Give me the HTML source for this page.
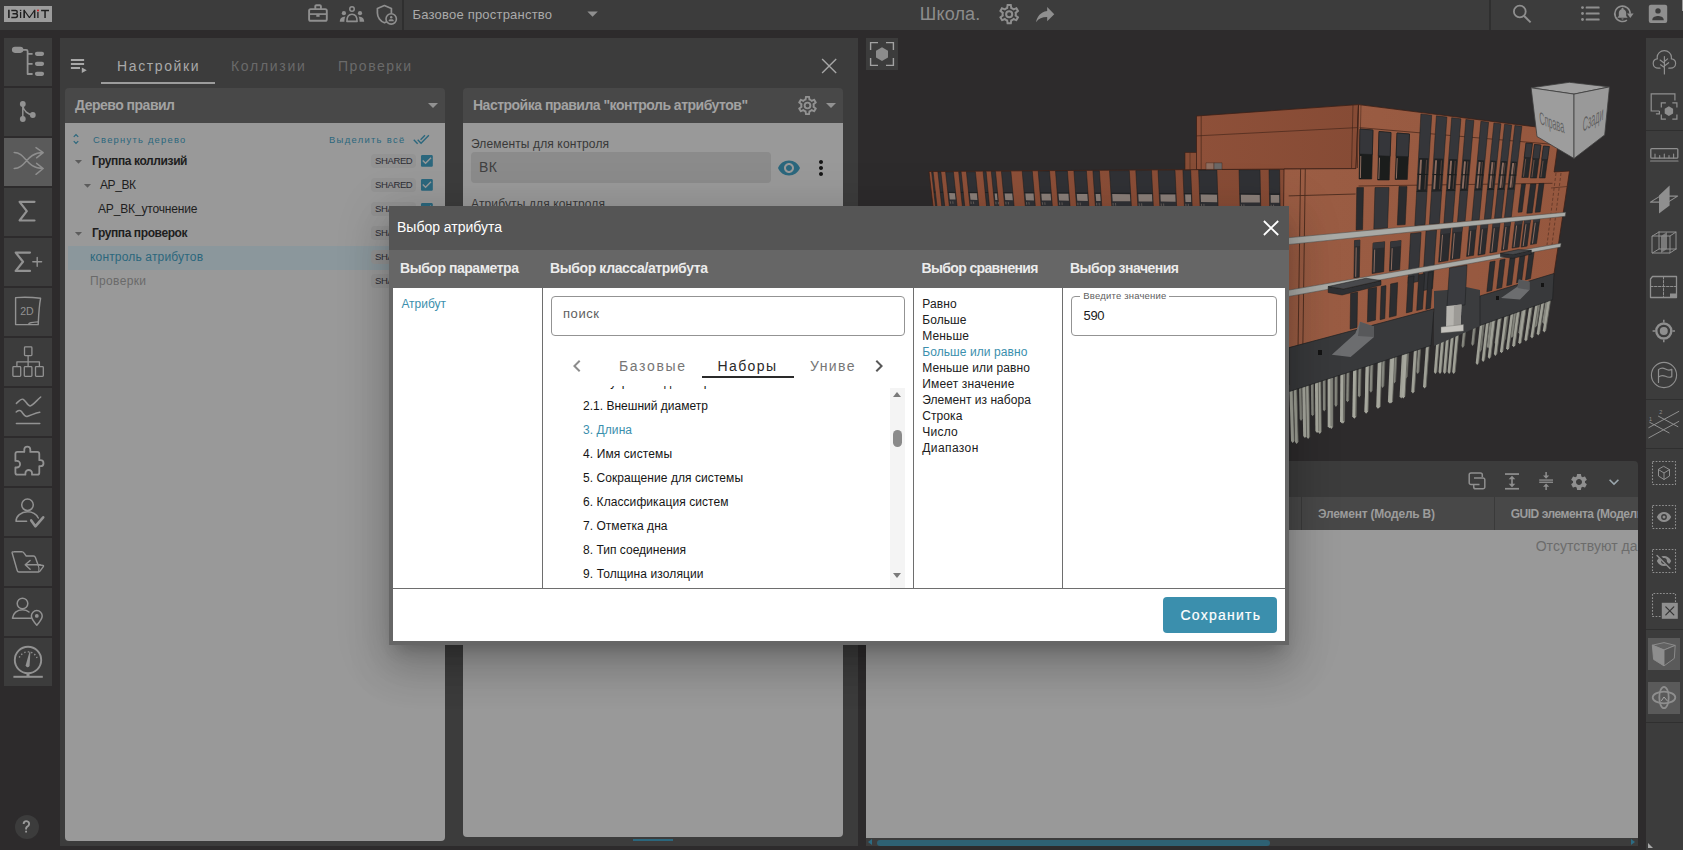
<!DOCTYPE html>
<html><head><meta charset="utf-8"><title>BIMIT</title>
<style>
html,body{margin:0;padding:0;}
body{width:1683px;height:850px;overflow:hidden;background:#2d2b2c;position:relative;font-family:"Liberation Sans",sans-serif;}
.t{position:absolute;white-space:nowrap;line-height:1;}
.r{position:absolute;display:block;}
</style></head><body>
<div class="r" style="left:0px;top:0px;width:1683px;height:30px;background:#3c3c3c;"></div>
<div class="r" style="left:4px;top:6.2px;width:48px;height:15.7px;background:#9c9c9c;"></div>
<svg class="r" style="left:4px;top:6px;" width="48" height="16" viewBox="0 0 48 16"><g fill="none" stroke="#202020" stroke-width="1.500"><path d="M4.900 3.700V12.100" stroke-width="1.600"/><path d="M7.300 4.450H11.600a1.650 1.650 0 0 1 0 3.300H8.500M11.600 7.750a1.850 1.850 0 0 1 0 3.700H7.300" stroke-width="1.450"/><path d="M16.600 6.100V12.100M33.900 6.100V12.100" stroke-width="1.300"/><path d="M20.200 12.100V4.300L25.400 11.600 30.600 4.300V12.100" stroke-width="1.100" stroke-linejoin="bevel"/><path d="M20.200 12.100V3.800M30.600 12.100V3.800" stroke-width="1.400"/><path d="M37.100 4.450H45M41.050 4.450V12.100" stroke-width="1.500"/></g><rect x="15.900" y="3.800" width="1.400" height="1.300" fill="#202020"/><circle cx="34" cy="4.400" r="1" fill="#d01818"/></svg>
<div class="r" style="left:402.2px;top:0px;width:2px;height:30px;background:#2f2f2f;"></div>
<div class="r" style="left:1489px;top:0px;width:2px;height:30px;background:#2f2f2f;"></div>
<div class="t" style="left:412.5px;top:8.20px;font-size:13px;color:#aaaaaa;letter-spacing:0.210px;">Базовое пространство</div>
<div class="t" style="left:919.8px;top:4.56px;font-size:18px;color:#8c8c8c;letter-spacing:0.140px;">Школа.</div>
<svg class="r" style="left:300px;top:0px;" width="110" height="30" viewBox="0 0 110 30"><g fill="none" stroke="#8f8f8f" stroke-width="1.9" stroke-linejoin="round">
<rect x="9.1" y="9.1" width="17.7" height="11.700" rx="1.600"/><path d="M15.300 9V6.300a1.100 1.100 0 0 1 1.100-1.100h3.400a1.100 1.100 0 0 1 1.100 1.100V9"/><path d="M9.100 14.100H26.800" stroke-width="1.700"/></g>
<rect x="16.300" y="14.300" width="3.300" height="2.500" fill="#8f8f8f"/>
<circle cx="52" cy="8.900" r="2.250" fill="none" stroke="#8f8f8f" stroke-width="1.500"/>
<path d="M46.900 21.400C46.900 17 48.500 14.300 52 14.300S57.100 17 57.100 21.400Z" fill="none" stroke="#8f8f8f" stroke-width="1.600" stroke-linejoin="round"/>
<circle cx="43.900" cy="13.200" r="2.100" fill="#8f8f8f"/><circle cx="60" cy="13.200" r="2.100" fill="#8f8f8f"/>
<path d="M39.800 21.800C39.800 18.500 41.500 16.500 45.400 16.400 44.600 18 44.400 19.800 44.400 21.800Z" fill="#8f8f8f"/>
<path d="M64.200 21.800C64.200 18.500 62.500 16.500 58.600 16.400 59.400 18 59.600 19.800 59.600 21.800Z" fill="#8f8f8f"/>
<path d="M91.400 13.200V8.500L84.400 5.500 77.400 8.500V13C77.400 17.500 80.400 21.500 84.400 22.800 85.300 22.500 86.100 22.100 86.800 21.600" fill="none" stroke="#8f8f8f" stroke-width="1.700" stroke-linejoin="round"/>
<circle cx="91.200" cy="18.900" r="5.200" fill="#3c3c3c" stroke="#8f8f8f" stroke-width="1.600"/>
<circle cx="91.200" cy="17.300" r="1.200" fill="#8f8f8f"/><path d="M88.500 21.300C88.500 19.600 90 19.300 91.200 19.300S93.900 19.600 93.900 21.300Z" fill="#8f8f8f"/></svg>
<svg class="r" style="left:579.6px;top:0.9px;" width="25.2" height="25.2" viewBox="0 0 24 24"><path d="M7 10l5 5 5-5z" fill="#8f8f8f"/></svg>
<svg class="r" style="left:996.6px;top:1.8px;" width="24.4" height="24.4" viewBox="0 0 24 24"><path d="M12,8A4,4 0 0,1 16,12A4,4 0 0,1 12,16A4,4 0 0,1 8,12A4,4 0 0,1 12,8M12,10A2,2 0 0,0 10,12A2,2 0 0,0 12,14A2,2 0 0,0 14,12A2,2 0 0,0 12,10M10,22C9.75,22 9.54,21.82 9.5,21.58L9.13,18.93C8.5,18.68 7.96,18.34 7.44,17.94L4.95,18.95C4.73,19.03 4.46,18.95 4.34,18.73L2.34,15.27C2.21,15.05 2.27,14.78 2.46,14.63L4.57,12.97L4.5,12L4.57,11L2.46,9.37C2.27,9.22 2.21,8.95 2.34,8.73L4.34,5.27C4.46,5.05 4.73,4.96 4.95,5.05L7.44,6.05C7.96,5.66 8.5,5.32 9.13,5.07L9.5,2.42C9.54,2.18 9.75,2 10,2H14C14.25,2 14.46,2.18 14.5,2.42L14.87,5.07C15.5,5.32 16.04,5.66 16.56,6.05L19.05,5.05C19.27,4.96 19.54,5.05 19.66,5.27L21.66,8.73C21.79,8.95 21.73,9.22 21.54,9.37L19.43,11L19.5,12L19.43,13L21.54,14.63C21.73,14.78 21.79,15.05 21.66,15.27L19.66,18.73C19.54,18.95 19.27,19.04 19.05,18.95L16.56,17.95C16.04,18.34 15.5,18.68 14.87,18.93L14.5,21.58C14.46,21.82 14.25,22 14,22H10M11.25,4L10.88,6.61C9.68,6.86 8.62,7.5 7.85,8.39L5.44,7.35L4.69,8.65L6.8,10.2C6.4,11.37 6.4,12.64 6.8,13.8L4.68,15.36L5.43,16.66L7.86,15.62C8.63,16.5 9.68,17.14 10.87,17.38L11.24,20H12.76L13.13,17.39C14.32,17.14 15.37,16.5 16.14,15.62L18.57,16.66L19.32,15.36L17.2,13.81C17.6,12.64 17.6,11.37 17.2,10.2L19.31,8.65L18.56,7.35L16.15,8.39C15.38,7.5 14.32,6.86 13.12,6.62L12.75,4H11.25Z" fill="#8f8f8f"/></svg>
<svg class="r" style="left:1032.8px;top:1.9px;" width="24.3" height="24.3" viewBox="0 0 24 24"><path d="M21,12L14,5V9C7,10 4,15 3,20C5.5,16.5 9,14.9 14,14.9V19L21,12Z" fill="#8f8f8f"/></svg>
<svg class="r" style="left:1508px;top:0px;" width="175" height="30" viewBox="0 0 175 30"><circle cx="11.800" cy="11.500" r="5.900" fill="none" stroke="#8f8f8f" stroke-width="1.800"/><path d="M16.200 16L22.600 22.400" stroke="#8f8f8f" stroke-width="2"/>
<g fill="#8f8f8f"><circle cx="74.500" cy="7.600" r="1.400"/><circle cx="74.500" cy="13.500" r="1.400"/><circle cx="74.500" cy="19.500" r="1.400"/>
<rect x="77.700" y="6.600" width="13.900" height="2" rx=".6"/><rect x="77.700" y="12.500" width="13.900" height="2" rx=".6"/><rect x="77.700" y="18.500" width="13.900" height="2" rx=".6"/></g>
<path d="M118.920 20.110A7.700 7.700 0 1 1 122.200 13.800" fill="none" stroke="#8f8f8f" stroke-width="1.600"/>
<path d="M119 13.500h6.600l-3.300 4.500z" fill="#8f8f8f"/>
<path d="M114.500 7.700c-.6 0-1 .4-1 1v.5c-1.700.5-2.700 2-2.700 3.800v3l-1.200 1.200v.6h9.800v-.6l-1.200-1.200v-3c0-1.800-1-3.300-2.700-3.800v-.5c0-.6-.4-1-1-1zM113.400 18.500a1.100 1.100 0 0 0 2.200 0z" fill="#8f8f8f"/>
<rect x="140.800" y="4.800" width="18.400" height="18.100" rx="2" fill="#8f8f8f"/>
<circle cx="150" cy="10.900" r="2.700" fill="#3c3c3c"/><path d="M144.300 19.700C144.300 17 148 16 150 16S155.700 17 155.700 19.700V20.200H144.300Z" fill="#3c3c3c"/></svg>
<div class="r" style="left:1682px;top:0px;width:1px;height:11px;background:#9a9a9a;"></div>
<div class="r" style="left:4px;top:38px;width:48px;height:48px;background:#3c3c3c;"></div>
<div class="r" style="left:4px;top:88px;width:48px;height:48px;background:#3c3c3c;"></div>
<div class="r" style="left:4px;top:138px;width:48px;height:48px;background:#5a5a5a;"></div>
<div class="r" style="left:4px;top:188px;width:48px;height:48px;background:#3c3c3c;"></div>
<div class="r" style="left:4px;top:238px;width:48px;height:48px;background:#3c3c3c;"></div>
<div class="r" style="left:4px;top:288px;width:48px;height:48px;background:#3c3c3c;"></div>
<div class="r" style="left:4px;top:338px;width:48px;height:48px;background:#3c3c3c;"></div>
<div class="r" style="left:4px;top:388px;width:48px;height:48px;background:#3c3c3c;"></div>
<div class="r" style="left:4px;top:438px;width:48px;height:48px;background:#3c3c3c;"></div>
<div class="r" style="left:4px;top:488px;width:48px;height:48px;background:#3c3c3c;"></div>
<div class="r" style="left:4px;top:538px;width:48px;height:48px;background:#3c3c3c;"></div>
<div class="r" style="left:4px;top:588px;width:48px;height:48px;background:#3c3c3c;"></div>
<div class="r" style="left:4px;top:638px;width:48px;height:48px;background:#3c3c3c;"></div>
<div class="r" style="left:15px;top:815px;width:24px;height:24px;border-radius:12px;background:#3c3c3c"></div>
<svg class="r" style="left:19.1px;top:818.5px;" width="14.8" height="14.8" viewBox="0 0 24 24"><path d="M10,19H13V22H10V19M12,2C17.35,2.22 19.68,7.62 16.5,11.67C15.67,12.67 14.33,13.33 13.67,14.17C13,15 13,16 13,17H10C10,15.33 10,13.92 10.67,12.92C11.33,11.92 12.67,11.33 13.5,10.67C15.92,8.43 15.32,5.26 12,5A3,3 0 0,0 9,8H6A6,6 0 0,1 12,2Z" fill="#9a9a9a"/></svg>
<svg class="r" style="left:4px;top:38px" width="48" height="48" viewBox="0 0 48 48" fill="none" stroke="#929292" stroke-width="1.6" stroke-linecap="round" stroke-linejoin="round"><rect x="7.9" y="8.8" width="11.5" height="6.1" rx="3.05" fill="#929292" stroke="none"/><path d="M19 11.8h3.2a1.4 1.4 0 0 1 1.4 1.4V36h5" stroke-width="1.8" stroke-linecap="butt"/><path d="M23.6 15.9h5M23.6 25.9h5" stroke-width="1.8" stroke-linecap="butt"/><rect x="30.9" y="13.8" width="9.2" height="4.1" rx="2.05" fill="#929292" stroke="none"/><rect x="30.9" y="23.8" width="9.2" height="4.1" rx="2.05" fill="#929292" stroke="none"/><rect x="30.9" y="33.8" width="9.2" height="4.1" rx="2.05" fill="#929292" stroke="none"/></svg>
<svg class="r" style="left:4px;top:88px" width="48" height="48" viewBox="0 0 48 48" fill="none" stroke="#929292" stroke-width="1.6" stroke-linecap="round" stroke-linejoin="round"><circle cx="18.8" cy="16" r="2.9" fill="#929292" stroke="none"/><circle cx="18.8" cy="31" r="2.9" fill="#929292" stroke="none"/><circle cx="28.8" cy="27" r="2.9" fill="#929292" stroke="none"/><path d="M18.8 16V31M18.8 17.5C19.5 23 24 26.5 28.8 27" stroke-width="1.5"/></svg>
<svg class="r" style="left:4px;top:138px" width="48" height="48" viewBox="0 0 48 48" fill="none" stroke="#8e8e8e" stroke-width="1.6" stroke-linecap="round" stroke-linejoin="round"><path d="M10.2 14.6C22 14.6 22 30.5 39 30.5M10.2 30.500C22 30.5 22 14.6 39 14.6M32 9.6l7.2 5-6.6 5.200M32.6 25.4l6.600 5.100-7.200 5.800" stroke-width="1.5"/></svg>
<svg class="r" style="left:4px;top:188px" width="48" height="48" viewBox="0 0 48 48" fill="none" stroke="#929292" stroke-width="1.6" stroke-linecap="round" stroke-linejoin="round"><path d="M30.5 13.8H15.6L22.800 23.100 15.600 32.500H30.500" stroke-width="2.2"/></svg>
<svg class="r" style="left:4px;top:238px" width="48" height="48" viewBox="0 0 48 48" fill="none" stroke="#929292" stroke-width="1.6" stroke-linecap="round" stroke-linejoin="round"><path d="M26 14.600H11.700L19 23.700 11.700 32.900H26" stroke-width="2.200"/><path d="M28.8 23.800h8.800M33.200 19.400v8.800" stroke-width="1.4"/></svg>
<svg class="r" style="left:4px;top:288px" width="48" height="48" viewBox="0 0 48 48" fill="none" stroke="#929292" stroke-width="1.6" stroke-linecap="round" stroke-linejoin="round"><path d="M11.6 9.6C20 9 29 9.300 36.600 10.300 35 18 34.600 28 34.200 36.600H11.600Z" stroke-width="1.400"/><path d="M24.500 36.300C25 34.500 27 34.300 34.200 33.800" stroke-width="1.300"/><text x="16.200" y="26.600" font-family="Liberation Sans" font-size="10" fill="#929292" stroke="none" textLength="13.500" lengthAdjust="spacingAndGlyphs">2D</text></svg>
<svg class="r" style="left:4px;top:338px" width="48" height="48" viewBox="0 0 48 48" fill="none" stroke="#929292" stroke-width="1.6" stroke-linecap="round" stroke-linejoin="round"><rect x="20.5" y="8.9" width="7.4" height="8.7" rx="0.8" stroke-width="1.300"/><rect x="8.9" y="28.700" width="7.800" height="9.700" rx="0.8" stroke-width="1.300"/><rect x="20.300" y="28.700" width="7.600" height="9.700" rx="0.8" stroke-width="1.300"/><rect x="31.500" y="28.700" width="7.800" height="9.700" rx="0.800" stroke-width="1.300"/><path d="M24.100 17.600V28.600M12.900 28.600V23.800H35.400V28.600" stroke-width="1.300" stroke-linecap="butt"/></svg>
<svg class="r" style="left:4px;top:388px" width="48" height="48" viewBox="0 0 48 48" fill="none" stroke="#929292" stroke-width="1.6" stroke-linecap="round" stroke-linejoin="round"><path d="M12.400 15.400C15 13 17 10.500 19 11.200 21.500 12 23.500 18 26.100 18 29 17.500 33 12 36.700 9M12.200 24C14 22.300 16 21.800 17.500 23.500 19 25.500 20.500 28.600 23 28.400 27 27.500 31 24.800 35.800 24.300M12.400 35.600H35.800" stroke-width="1.500"/></svg>
<svg class="r" style="left:4px;top:438px" width="48" height="48" viewBox="0 0 48 48" fill="none" stroke="#929292" stroke-width="1.6" stroke-linecap="round" stroke-linejoin="round"><path d="M23.300 8.600a3 3 0 0 1 3 3v2.300h7a2 2 0 0 1 2 2v6.300h1.200a3 3 0 0 1 0 6h-1.200v6.500a2 2 0 0 1-2 2h-5.300v-1.400a3.300 3.300 0 0 0-6.600 0v1.400h-8a2 2 0 0 1-2-2v-5.200h1.400a3.300 3.300 0 0 0 0-6.600h-1.400v-7a2 2 0 0 1 2-2h6.900v-2.300a3 3 0 0 1 3-3z" stroke-width="1.800"/></svg>
<svg class="r" style="left:4px;top:488px" width="48" height="48" viewBox="0 0 48 48" fill="none" stroke="#929292" stroke-width="1.6" stroke-linecap="round" stroke-linejoin="round"><circle cx="23.500" cy="16.800" r="5.800" stroke-width="1.500"/><path d="M22.600 33.200H12C12 28 17 23.800 23.500 23.800 28.500 23.800 32.500 26.500 34.300 30" stroke-width="1.500"/><path d="M27.200 32.400l4.200 5.900 7.800-9" stroke-width="2.600"/></svg>
<svg class="r" style="left:4px;top:538px" width="48" height="48" viewBox="0 0 48 48" fill="none" stroke="#929292" stroke-width="1.6" stroke-linecap="round" stroke-linejoin="round"><path d="M8.100 14.700C8 14 9 13.800 10 13.800L17.500 13.600C19 13.600 19.500 14.200 20.300 15.400L22.200 18H29.500C30.500 18 31 18.500 31.400 19.600L34 26.800 39 27.500C39.600 27.600 39.700 28 39.300 28.600L36 33.200C35.500 33.900 35 34 34.200 34H15C14 34 13.500 33.600 13.200 32.500Z" stroke-width="1.400"/><path d="M36.200 26.800H21.700M26.100 22.400l-4.900 4.400 4.900 4.400" stroke-width="1.400"/><path d="M34 26.800C35 29 35.500 31.500 34.700 33.800" stroke-width="1.100"/></svg>
<svg class="r" style="left:4px;top:588px" width="48" height="48" viewBox="0 0 48 48" fill="none" stroke="#929292" stroke-width="1.6" stroke-linecap="round" stroke-linejoin="round"><circle cx="18.500" cy="15.500" r="5.300" stroke-width="1.500"/><path d="M27 30.200H8.500C9 25.500 13 21.700 18.500 21.700 21 21.700 23.500 22.600 25 24" stroke-width="1.500"/><path d="M32.800 37.200C29.500 33.500 27.400 31 27.400 28a5.400 5.400 0 0 1 10.800 0C38.200 31 36.100 33.500 32.800 37.200Z" stroke-width="1.500"/><circle cx="32.800" cy="27.900" r="1.900" fill="#929292" stroke="none"/></svg>
<svg class="r" style="left:4px;top:638px" width="48" height="48" viewBox="0 0 48 48" fill="none" stroke="#929292" stroke-width="1.6" stroke-linecap="round" stroke-linejoin="round"><circle cx="24" cy="22" r="13.200" stroke-width="1.900"/><path d="M21.700 27.200L25.600 13.600 26.400 13.800 25.600 27.800A2 2 0 0 1 21.700 27.200Z" fill="#929292" stroke="none"/><path d="M15.300 19.500A9.600 9.600 0 0 1 33 20" stroke-width="1.400" stroke-dasharray="1.300 2.200" stroke-linecap="butt"/><path d="M24 35.300V38.500" stroke-width="3" stroke-linecap="butt"/><path d="M9.400 38.800H38.800" stroke-width="2" stroke-linecap="butt"/></svg>
<div class="r" style="left:60px;top:38px;width:798px;height:808px;background:#3c3c3c;"></div>
<svg class="r" style="left:68px;top:55px;" width="22" height="22" viewBox="0 0 22 22"><path d="M2.9 3.9h13.200v2H2.900zM2.900 7.900h13.200v2H2.900zM2.900 11.900h9.100v2H2.900zM13.800 12.500v5.500l5-2.750z" fill="#a8a8a8"/></svg>
<div class="t" style="left:117.0px;top:59.15px;font-size:14px;color:#a9a9a9;letter-spacing:1.620px;">Настройки</div>
<div class="t" style="left:231.0px;top:59.15px;font-size:14px;color:#6a6a6a;letter-spacing:1.708px;">Коллизии</div>
<div class="t" style="left:338.0px;top:59.15px;font-size:14px;color:#6a6a6a;letter-spacing:1.510px;">Проверки</div>
<div class="r" style="left:101px;top:82px;width:114px;height:2px;background:#9c9c9c;"></div>
<svg class="r" style="left:818px;top:55px;" width="22" height="22" viewBox="0 0 22 22"><path d="M4.100 4.100L18.200 18.100M18.200 4.100L4.100 18.100" stroke="#a6a6a6" stroke-width="1.400" fill="none"/></svg>
<div class="r" style="left:65px;top:88px;width:380px;height:35px;background:#484848;border-radius:4px 4px 0 0"></div>
<div class="r" style="left:65px;top:123px;width:380px;height:718px;background:#999999;border-radius:0 0 4px 4px"></div>
<div class="t" style="left:75.0px;top:97.95px;font-size:14px;color:#a2a2a2;font-weight:700;letter-spacing:-0.502px;">Дерево правил</div>
<svg class="r" style="left:420.8px;top:93.3px;" width="24" height="24" viewBox="0 0 24 24"><path d="M7 10l5 5 5-5z" fill="#929292"/></svg>
<svg class="r" style="left:69px;top:132px;" width="14" height="14" viewBox="0 0 24 24"><path d="M12 5.83L15.17 9l1.41-1.41L12 3 7.41 7.59 8.83 9 12 5.83zm0 12.34L8.83 15l-1.41 1.41L12 21l4.59-4.59L15.17 15 12 18.17z" fill="#2b677d"/></svg>
<div class="t" style="left:93.0px;top:135.14px;font-size:9.4px;color:#2b677d;letter-spacing:1.242px;">Свернуть дерево</div>
<div class="t" style="left:329.0px;top:135.34px;font-size:9.4px;color:#2b677d;letter-spacing:1.319px;">Выделить всё</div>
<svg class="r" style="left:413.2px;top:130.8px;" width="16.6" height="16.6" viewBox="0 0 24 24"><path d="M18 7l-1.41-1.41-6.34 6.34 1.41 1.41L18 7zm4.24-1.41L11.66 16.17 7.48 12l-1.41 1.41L11.660 19l12-12-1.420-1.410zM.41 13.41L6 19l1.41-1.410L1.830 12 .410 13.410z" fill="#2b677d"/></svg>
<div class="r" style="left:68px;top:245.5px;width:374px;height:24px;background:#8b979c;"></div>
<div class="t" style="left:92.0px;top:155.14px;font-size:12px;color:#1e1e1e;font-weight:700;letter-spacing:-0.387px;">Группа коллизий</div>
<div class="r" style="left:371.2px;top:154.1px;width:45.300px;height:13.500px;border-radius:4px;background:#939393"></div>
<div class="t" style="left:375.0px;top:155.76px;font-size:9.5px;color:#2c2c34;letter-spacing:-0.379px;">SHARED</div>
<svg class="r" style="left:419.2px;top:153px;" width="15.8" height="15.8" viewBox="0 0 24 24"><path d="M19 3H5c-1.11 0-2 .9-2 2v14c0 1.1.89 2 2 2h14c1.11 0 2-.9 2-2V5c0-1.1-.89-2-2-2zm-9 14l-5-5 1.41-1.41L10 14.17l7.59-7.59L19 8l-9 9z" fill="#2b677d"/></svg>
<div class="t" style="left:100.0px;top:179.14px;font-size:12px;color:#1e1e1e;letter-spacing:-0.419px;">АР_ВК</div>
<div class="r" style="left:371.2px;top:178.1px;width:45.300px;height:13.500px;border-radius:4px;background:#939393"></div>
<div class="t" style="left:375.0px;top:179.76px;font-size:9.5px;color:#2c2c34;letter-spacing:-0.379px;">SHARED</div>
<svg class="r" style="left:419.2px;top:177px;" width="15.8" height="15.8" viewBox="0 0 24 24"><path d="M19 3H5c-1.11 0-2 .9-2 2v14c0 1.1.89 2 2 2h14c1.11 0 2-.9 2-2V5c0-1.1-.89-2-2-2zm-9 14l-5-5 1.41-1.41L10 14.17l7.59-7.59L19 8l-9 9z" fill="#2b677d"/></svg>
<div class="t" style="left:98.0px;top:203.14px;font-size:12px;color:#1e1e1e;letter-spacing:-0.155px;">АР_ВК_уточнение</div>
<div class="r" style="left:371.2px;top:202.1px;width:45.300px;height:13.500px;border-radius:4px;background:#939393"></div>
<div class="t" style="left:375.0px;top:203.76px;font-size:9.5px;color:#2c2c34;letter-spacing:-0.379px;">SHARED</div>
<svg class="r" style="left:419.2px;top:201px;" width="15.8" height="15.8" viewBox="0 0 24 24"><path d="M19 3H5c-1.11 0-2 .9-2 2v14c0 1.1.89 2 2 2h14c1.11 0 2-.9 2-2V5c0-1.1-.89-2-2-2zm-9 14l-5-5 1.41-1.41L10 14.17l7.59-7.59L19 8l-9 9z" fill="#2b677d"/></svg>
<div class="t" style="left:92.0px;top:227.14px;font-size:12px;color:#1e1e1e;font-weight:700;letter-spacing:-0.404px;">Группа проверок</div>
<div class="r" style="left:371.2px;top:226.1px;width:45.300px;height:13.500px;border-radius:4px;background:#939393"></div>
<div class="t" style="left:375.0px;top:227.76px;font-size:9.5px;color:#2c2c34;letter-spacing:-0.379px;">SHARED</div>
<svg class="r" style="left:419.2px;top:225px;" width="15.8" height="15.8" viewBox="0 0 24 24"><path d="M19 3H5c-1.11 0-2 .9-2 2v14c0 1.1.89 2 2 2h14c1.11 0 2-.9 2-2V5c0-1.1-.89-2-2-2zm-9 14l-5-5 1.41-1.41L10 14.17l7.59-7.59L19 8l-9 9z" fill="#2b677d"/></svg>
<div class="t" style="left:90.0px;top:251.14px;font-size:12px;color:#2b677d;letter-spacing:0.168px;">контроль атрибутов</div>
<div class="r" style="left:371.2px;top:250.1px;width:45.300px;height:13.500px;border-radius:4px;background:#939393"></div>
<div class="t" style="left:375.0px;top:251.76px;font-size:9.5px;color:#2c2c34;letter-spacing:-0.379px;">SHARED</div>
<svg class="r" style="left:419.2px;top:249px;" width="15.8" height="15.8" viewBox="0 0 24 24"><path d="M19 3H5c-1.11 0-2 .9-2 2v14c0 1.1.89 2 2 2h14c1.11 0 2-.9 2-2V5c0-1.1-.89-2-2-2zm-9 14l-5-5 1.41-1.41L10 14.17l7.59-7.59L19 8l-9 9z" fill="#2b677d"/></svg>
<div class="t" style="left:90.0px;top:275.14px;font-size:12px;color:#6a6a6a;letter-spacing:0.356px;">Проверки</div>
<div class="r" style="left:371.2px;top:274.1px;width:45.300px;height:13.500px;border-radius:4px;background:#939393"></div>
<div class="t" style="left:375.0px;top:275.76px;font-size:9.5px;color:#2c2c34;letter-spacing:-0.379px;">SHARED</div>
<svg class="r" style="left:419.2px;top:273px;" width="15.8" height="15.8" viewBox="0 0 24 24"><path d="M19 3H5c-1.11 0-2 .9-2 2v14c0 1.1.89 2 2 2h14c1.11 0 2-.9 2-2V5c0-1.1-.89-2-2-2zm-9 14l-5-5 1.41-1.41L10 14.17l7.59-7.59L19 8l-9 9z" fill="#2b677d"/></svg>
<svg class="r" style="left:69.5px;top:153.2px;" width="17" height="17" viewBox="0 0 24 24"><path d="M7 10l5 5 5-5z" fill="#5c5c5c"/></svg>
<svg class="r" style="left:78.5px;top:177.2px;" width="17" height="17" viewBox="0 0 24 24"><path d="M7 10l5 5 5-5z" fill="#5c5c5c"/></svg>
<svg class="r" style="left:69.5px;top:225.2px;" width="17" height="17" viewBox="0 0 24 24"><path d="M7 10l5 5 5-5z" fill="#5c5c5c"/></svg>
<div class="r" style="left:463px;top:88px;width:380px;height:35px;background:#484848;border-radius:4px 4px 0 0"></div>
<div class="r" style="left:463px;top:123px;width:380px;height:713.800px;background:#999999;border-radius:0 0 4px 4px"></div>
<div class="t" style="left:473.0px;top:97.95px;font-size:14px;color:#a2a2a2;font-weight:700;letter-spacing:-0.504px;">Настройка правила "контроль атрибутов"</div>
<svg class="r" style="left:795.5px;top:93.5px;" width="23" height="23" viewBox="0 0 24 24"><path d="M12,8A4,4 0 0,1 16,12A4,4 0 0,1 12,16A4,4 0 0,1 8,12A4,4 0 0,1 12,8M12,10A2,2 0 0,0 10,12A2,2 0 0,0 12,14A2,2 0 0,0 14,12A2,2 0 0,0 12,10M10,22C9.75,22 9.54,21.82 9.5,21.58L9.13,18.93C8.5,18.68 7.96,18.34 7.44,17.94L4.95,18.95C4.73,19.03 4.46,18.95 4.34,18.73L2.34,15.27C2.21,15.05 2.27,14.78 2.46,14.63L4.57,12.97L4.5,12L4.57,11L2.46,9.37C2.27,9.22 2.21,8.95 2.34,8.73L4.34,5.27C4.46,5.05 4.73,4.96 4.95,5.05L7.44,6.05C7.96,5.66 8.5,5.32 9.13,5.07L9.5,2.42C9.54,2.18 9.75,2 10,2H14C14.25,2 14.46,2.18 14.5,2.42L14.87,5.07C15.5,5.32 16.04,5.66 16.56,6.05L19.05,5.05C19.27,4.96 19.54,5.05 19.66,5.27L21.66,8.73C21.79,8.95 21.73,9.22 21.54,9.37L19.43,11L19.5,12L19.43,13L21.54,14.63C21.73,14.78 21.79,15.05 21.66,15.27L19.66,18.73C19.54,18.95 19.27,19.04 19.05,18.95L16.56,17.95C16.04,18.34 15.5,18.68 14.87,18.93L14.5,21.58C14.46,21.82 14.25,22 14,22H10M11.25,4L10.88,6.61C9.68,6.86 8.62,7.5 7.85,8.39L5.44,7.35L4.69,8.65L6.8,10.2C6.4,11.37 6.4,12.64 6.8,13.8L4.68,15.36L5.43,16.66L7.86,15.62C8.63,16.5 9.68,17.14 10.87,17.38L11.24,20H12.76L13.13,17.39C14.32,17.14 15.37,16.5 16.14,15.62L18.57,16.66L19.32,15.36L17.2,13.81C17.6,12.64 17.6,11.37 17.2,10.2L19.31,8.65L18.56,7.35L16.15,8.39C15.38,7.5 14.32,6.86 13.12,6.62L12.75,4H11.25Z" fill="#929292"/></svg>
<svg class="r" style="left:819.3px;top:93.3px;" width="24" height="24" viewBox="0 0 24 24"><path d="M7 10l5 5 5-5z" fill="#929292"/></svg>
<div class="t" style="left:471.0px;top:137.84px;font-size:12px;color:#383838;letter-spacing:0.125px;">Элементы для контроля</div>
<div class="r" style="left:471px;top:152px;width:300px;height:31px;border-radius:4px;background:#8b8b8b"></div>
<div class="t" style="left:479.0px;top:160.45px;font-size:14px;color:#404040;letter-spacing:0.507px;">ВК</div>
<svg class="r" style="left:777px;top:156px;" width="24" height="24" viewBox="0 0 24 24"><path d="M12 4.5C7 4.5 2.73 7.61 1 12c1.73 4.39 6 7.5 11 7.5s9.27-3.11 11-7.5c-1.73-4.39-6-7.5-11-7.5zM12 17c-2.76 0-5-2.24-5-5s2.24-5 5-5 5 2.24 5 5-2.24 5-5 5zm0-8c-1.66 0-3 1.34-3 3s1.34 3 3 3 3-1.34 3-3-1.34-3-3-3z" fill="#2b677d"/></svg>
<svg class="r" style="left:809px;top:156px;" width="24" height="24" viewBox="0 0 24 24"><path d="M12 8c1.1 0 2-.9 2-2s-.9-2-2-2-2 .9-2 2 .9 2 2 2zm0 2c-1.1 0-2 .9-2 2s.9 2 2 2 2-.9 2-2-.9-2-2-2zm0 6c-1.1 0-2 .9-2 2s.9 2 2 2 2-.9 2-2-.9-2-2-2z" fill="#151515"/></svg>
<div class="t" style="left:471.0px;top:197.84px;font-size:12px;color:#383838;letter-spacing:0.136px;">Атрибуты для контроля</div>
<div class="r" style="left:633px;top:839px;width:39.5px;height:2px;background:#2b677d;"></div>
<div class="r" style="left:866px;top:38px;width:772px;height:424px;background:#2d2b2c;"></div>
<svg class="r" style="left:866px;top:38px" width="772" height="424" viewBox="866 38 772 424"><defs><linearGradient id="gr" x1="0" x2="1" y1="0" y2="0"><stop offset="0" stop-color="#9b5d44"/><stop offset="1" stop-color="#95573e"/></linearGradient><linearGradient id="gl" x1="0" x2="1"><stop offset="0" stop-color="#8e5039"/><stop offset="1" stop-color="#864b35"/></linearGradient><linearGradient id="gw" x1="0" x2="1"><stop offset="0" stop-color="#98583e"/><stop offset="1" stop-color="#9f5e43"/></linearGradient></defs><polygon points="1298.7,377.0 1301.3,377.0 1302.3,419.0 1301.0,421.0 1299.7,419.0" fill="#85867e" /><line x1="1301.3" y1="377.0" x2="1302.3" y2="419.0" stroke="#5f5f59" stroke-width="0.8"/><polygon points="1310.7,373.1 1313.3,373.1 1313.9,414.3 1312.6,416.3 1311.3,414.3" fill="#85867e" /><line x1="1313.3" y1="373.1" x2="1313.9" y2="414.3" stroke="#5f5f59" stroke-width="0.8"/><polygon points="1322.7,369.2 1325.3,369.2 1325.5,409.6 1324.2,411.6 1322.9,409.6" fill="#85867e" /><line x1="1325.3" y1="369.2" x2="1325.5" y2="409.6" stroke="#5f5f59" stroke-width="0.8"/><polygon points="1334.7,365.3 1337.3,365.3 1337.2,404.9 1335.9,406.9 1334.6,404.9" fill="#85867e" /><line x1="1337.3" y1="365.3" x2="1337.2" y2="404.9" stroke="#5f5f59" stroke-width="0.8"/><polygon points="1346.7,361.4 1349.3,361.4 1348.8,400.2 1347.5,402.2 1346.2,400.2" fill="#85867e" /><line x1="1349.3" y1="361.4" x2="1348.8" y2="400.2" stroke="#5f5f59" stroke-width="0.8"/><polygon points="1358.7,357.5 1361.3,357.5 1360.5,395.5 1359.2,397.5 1357.9,395.5" fill="#85867e" /><line x1="1361.3" y1="357.5" x2="1360.5" y2="395.5" stroke="#5f5f59" stroke-width="0.8"/><polygon points="1370.7,353.6 1373.3,353.6 1372.2,390.8 1370.9,392.8 1369.6,390.8" fill="#85867e" /><line x1="1373.3" y1="353.6" x2="1372.2" y2="390.8" stroke="#5f5f59" stroke-width="0.8"/><polygon points="1382.7,349.7 1385.3,349.7 1383.9,386.1 1382.6,388.1 1381.3,386.1" fill="#85867e" /><line x1="1385.3" y1="349.7" x2="1383.9" y2="386.1" stroke="#5f5f59" stroke-width="0.8"/><polygon points="1394.7,345.8 1397.3,345.8 1395.6,381.4 1394.3,383.4 1393.0,381.4" fill="#85867e" /><line x1="1397.3" y1="345.8" x2="1395.6" y2="381.4" stroke="#5f5f59" stroke-width="0.8"/><polygon points="1406.7,341.9 1409.3,341.9 1407.3,376.7 1406.0,378.7 1404.7,376.7" fill="#85867e" /><line x1="1409.3" y1="341.9" x2="1407.3" y2="376.7" stroke="#5f5f59" stroke-width="0.8"/><polygon points="1418.7,338.0 1421.3,338.0 1419.0,372.0 1417.7,374.0 1416.4,372.0" fill="#85867e" /><line x1="1421.3" y1="338.0" x2="1419.0" y2="372.0" stroke="#5f5f59" stroke-width="0.8"/><polygon points="1293.4,382.0 1296.6,382.0 1298.2,442.0 1296.6,444.0 1295.0,442.0" fill="#9fa096" /><line x1="1296.6" y1="382.0" x2="1298.2" y2="442.0" stroke="#5f5f59" stroke-width="0.8"/><polygon points="1305.5,378.1 1308.7,378.1 1309.7,437.0 1308.1,439.0 1306.5,437.0" fill="#9fa096" /><line x1="1308.7" y1="378.1" x2="1309.7" y2="437.0" stroke="#5f5f59" stroke-width="0.8"/><polygon points="1317.6,374.3 1320.8,374.3 1321.3,431.9 1319.7,433.9 1318.1,431.9" fill="#9fa096" /><line x1="1320.8" y1="374.3" x2="1321.3" y2="431.9" stroke="#5f5f59" stroke-width="0.8"/><polygon points="1329.7,370.4 1332.9,370.4 1332.9,426.9 1331.3,428.9 1329.7,426.9" fill="#9fa096" /><line x1="1332.9" y1="370.4" x2="1332.9" y2="426.9" stroke="#5f5f59" stroke-width="0.8"/><polygon points="1341.8,366.5 1345.0,366.5 1344.5,421.8 1342.9,423.8 1341.3,421.8" fill="#9fa096" /><line x1="1345.0" y1="366.5" x2="1344.5" y2="421.8" stroke="#5f5f59" stroke-width="0.8"/><polygon points="1353.9,362.7 1357.1,362.7 1356.1,416.8 1354.5,418.8 1352.9,416.8" fill="#9fa096" /><line x1="1357.1" y1="362.7" x2="1356.1" y2="416.8" stroke="#5f5f59" stroke-width="0.8"/><polygon points="1365.9,358.8 1369.1,358.8 1367.7,411.7 1366.1,413.7 1364.5,411.7" fill="#9fa096" /><line x1="1369.1" y1="358.8" x2="1367.7" y2="411.7" stroke="#5f5f59" stroke-width="0.8"/><polygon points="1378.0,355.0 1381.2,355.0 1379.4,406.7 1377.8,408.7 1376.2,406.7" fill="#9fa096" /><line x1="1381.2" y1="355.0" x2="1379.4" y2="406.7" stroke="#5f5f59" stroke-width="0.8"/><polygon points="1390.1,351.1 1393.3,351.1 1391.1,401.6 1389.5,403.6 1387.9,401.6" fill="#9fa096" /><line x1="1393.3" y1="351.1" x2="1391.1" y2="401.6" stroke="#5f5f59" stroke-width="0.8"/><polygon points="1402.2,347.2 1405.4,347.2 1402.8,396.6 1401.2,398.6 1399.6,396.6" fill="#9fa096" /><line x1="1405.4" y1="347.2" x2="1402.8" y2="396.6" stroke="#5f5f59" stroke-width="0.8"/><polygon points="1414.3,343.4 1417.5,343.4 1414.5,391.5 1412.9,393.5 1411.3,391.5" fill="#9fa096" /><line x1="1417.5" y1="343.4" x2="1414.5" y2="391.5" stroke="#5f5f59" stroke-width="0.8"/><polygon points="1426.4,339.5 1429.6,339.5 1426.2,386.5 1424.6,388.5 1423.0,386.5" fill="#9fa096" /><line x1="1429.6" y1="339.5" x2="1426.2" y2="386.5" stroke="#5f5f59" stroke-width="0.8"/><polygon points="1289.3,385.0 1292.7,385.0 1294.4,441.0 1292.7,443.0 1291.0,441.0" fill="#a6a79d" /><line x1="1292.7" y1="385.0" x2="1294.4" y2="441.0" stroke="#5f5f59" stroke-width="0.8"/><polygon points="1302.1,380.8 1305.5,380.8 1306.6,436.1 1304.9,438.1 1303.2,436.1" fill="#a6a79d" /><line x1="1305.5" y1="380.8" x2="1306.6" y2="436.1" stroke="#5f5f59" stroke-width="0.8"/><polygon points="1314.9,376.7 1318.3,376.7 1318.8,431.1 1317.1,433.1 1315.4,431.1" fill="#a6a79d" /><line x1="1318.3" y1="376.7" x2="1318.8" y2="431.1" stroke="#5f5f59" stroke-width="0.8"/><polygon points="1327.6,372.5 1331.0,372.5 1331.1,426.2 1329.4,428.2 1327.7,426.2" fill="#a6a79d" /><line x1="1331.0" y1="372.5" x2="1331.1" y2="426.2" stroke="#5f5f59" stroke-width="0.8"/><polygon points="1340.4,368.3 1343.8,368.3 1343.4,421.2 1341.7,423.2 1340.0,421.2" fill="#a6a79d" /><line x1="1343.8" y1="368.3" x2="1343.4" y2="421.2" stroke="#5f5f59" stroke-width="0.8"/><polygon points="1353.2,364.2 1356.6,364.2 1355.7,416.3 1354.0,418.3 1352.3,416.3" fill="#a6a79d" /><line x1="1356.6" y1="364.2" x2="1355.7" y2="416.3" stroke="#5f5f59" stroke-width="0.8"/><polygon points="1366.0,360.0 1369.4,360.0 1368.0,411.3 1366.3,413.3 1364.6,411.3" fill="#a6a79d" /><line x1="1369.4" y1="360.0" x2="1368.0" y2="411.3" stroke="#5f5f59" stroke-width="0.8"/><polygon points="1378.7,355.8 1382.1,355.8 1380.3,406.4 1378.6,408.4 1376.9,406.4" fill="#a6a79d" /><line x1="1382.1" y1="355.8" x2="1380.3" y2="406.4" stroke="#5f5f59" stroke-width="0.8"/><polygon points="1391.5,351.7 1394.9,351.7 1392.6,401.4 1390.9,403.4 1389.2,401.4" fill="#a6a79d" /><line x1="1394.9" y1="351.7" x2="1392.6" y2="401.4" stroke="#5f5f59" stroke-width="0.8"/><polygon points="1404.3,347.5 1407.7,347.5 1405.0,396.5 1403.3,398.5 1401.6,396.5" fill="#a6a79d" /><line x1="1407.7" y1="347.5" x2="1405.0" y2="396.5" stroke="#5f5f59" stroke-width="0.8"/><polygon points="1437.5,327.0 1440.5,327.0 1436.9,372.0 1435.4,374.0 1433.9,372.0" fill="#9fa096" /><line x1="1440.5" y1="327.0" x2="1436.9" y2="372.0" stroke="#5f5f59" stroke-width="0.8"/><polygon points="1442.2,326.5 1445.2,326.5 1441.5,372.0 1440.0,374.0 1438.5,372.0" fill="#9fa096" /><line x1="1445.2" y1="326.5" x2="1441.5" y2="372.0" stroke="#5f5f59" stroke-width="0.8"/><polygon points="1447.0,326.0 1450.0,326.0 1446.1,372.0 1444.6,374.0 1443.1,372.0" fill="#9fa096" /><line x1="1450.0" y1="326.0" x2="1446.1" y2="372.0" stroke="#5f5f59" stroke-width="0.8"/><polygon points="1451.8,325.5 1454.8,325.5 1450.6,372.0 1449.1,374.0 1447.6,372.0" fill="#9fa096" /><line x1="1454.8" y1="325.5" x2="1450.6" y2="372.0" stroke="#5f5f59" stroke-width="0.8"/><polygon points="1456.5,325.0 1459.5,325.0 1455.2,372.0 1453.7,374.0 1452.2,372.0" fill="#9fa096" /><line x1="1459.5" y1="325.0" x2="1455.2" y2="372.0" stroke="#5f5f59" stroke-width="0.8"/><polygon points="1464.7,314.0 1467.3,314.0 1464.1,346.0 1462.8,348.0 1461.5,346.0" fill="#85867e" /><line x1="1467.3" y1="314.0" x2="1464.1" y2="346.0" stroke="#5f5f59" stroke-width="0.8"/><polygon points="1474.7,312.0 1477.3,312.0 1473.9,344.0 1472.6,346.0 1471.3,344.0" fill="#85867e" /><line x1="1477.3" y1="312.0" x2="1473.9" y2="344.0" stroke="#5f5f59" stroke-width="0.8"/><polygon points="1482.7,316.0 1485.3,316.0 1481.5,350.0 1480.2,352.0 1478.9,350.0" fill="#85867e" /><line x1="1485.3" y1="316.0" x2="1481.5" y2="350.0" stroke="#5f5f59" stroke-width="0.8"/><polygon points="1490.7,313.2 1493.3,313.2 1489.4,346.5 1488.1,348.5 1486.8,346.5" fill="#85867e" /><line x1="1493.3" y1="313.2" x2="1489.4" y2="346.5" stroke="#5f5f59" stroke-width="0.8"/><polygon points="1498.7,310.5 1501.3,310.5 1497.3,343.0 1496.0,345.0 1494.7,343.0" fill="#85867e" /><line x1="1501.3" y1="310.5" x2="1497.3" y2="343.0" stroke="#5f5f59" stroke-width="0.8"/><polygon points="1506.7,307.8 1509.3,307.8 1505.2,339.5 1503.9,341.5 1502.6,339.5" fill="#85867e" /><line x1="1509.3" y1="307.8" x2="1505.2" y2="339.5" stroke="#5f5f59" stroke-width="0.8"/><polygon points="1514.7,305.0 1517.3,305.0 1513.1,336.0 1511.8,338.0 1510.5,336.0" fill="#85867e" /><line x1="1517.3" y1="305.0" x2="1513.1" y2="336.0" stroke="#5f5f59" stroke-width="0.8"/><polygon points="1522.7,302.2 1525.3,302.2 1521.0,332.5 1519.7,334.5 1518.4,332.5" fill="#85867e" /><line x1="1525.3" y1="302.2" x2="1521.0" y2="332.5" stroke="#5f5f59" stroke-width="0.8"/><polygon points="1530.7,299.5 1533.3,299.5 1529.0,329.0 1527.7,331.0 1526.4,329.0" fill="#85867e" /><line x1="1533.3" y1="299.5" x2="1529.0" y2="329.0" stroke="#5f5f59" stroke-width="0.8"/><polygon points="1538.7,296.8 1541.3,296.8 1536.9,325.5 1535.6,327.5 1534.3,325.5" fill="#85867e" /><line x1="1541.3" y1="296.8" x2="1536.9" y2="325.5" stroke="#5f5f59" stroke-width="0.8"/><polygon points="1546.7,294.0 1549.3,294.0 1544.8,322.0 1543.5,324.0 1542.2,322.0" fill="#85867e" /><line x1="1549.3" y1="294.0" x2="1544.8" y2="322.0" stroke="#5f5f59" stroke-width="0.8"/><polygon points="1480.5,319.0 1483.5,319.0 1478.7,363.0 1477.2,365.0 1475.7,363.0" fill="#9fa096" /><line x1="1483.5" y1="319.0" x2="1478.7" y2="363.0" stroke="#5f5f59" stroke-width="0.8"/><polygon points="1486.7,316.8 1489.7,316.8 1484.7,360.0 1483.2,362.0 1481.7,360.0" fill="#9fa096" /><line x1="1489.7" y1="316.8" x2="1484.7" y2="360.0" stroke="#5f5f59" stroke-width="0.8"/><polygon points="1492.9,314.5 1495.9,314.5 1490.8,357.1 1489.3,359.1 1487.8,357.1" fill="#9fa096" /><line x1="1495.9" y1="314.5" x2="1490.8" y2="357.1" stroke="#5f5f59" stroke-width="0.8"/><polygon points="1499.0,312.3 1502.0,312.3 1496.9,354.1 1495.4,356.1 1493.9,354.1" fill="#9fa096" /><line x1="1502.0" y1="312.3" x2="1496.9" y2="354.1" stroke="#5f5f59" stroke-width="0.8"/><polygon points="1505.2,310.1 1508.2,310.1 1503.0,351.2 1501.5,353.2 1500.0,351.2" fill="#9fa096" /><line x1="1508.2" y1="310.1" x2="1503.0" y2="351.2" stroke="#5f5f59" stroke-width="0.8"/><polygon points="1511.4,307.9 1514.4,307.9 1509.1,348.2 1507.6,350.2 1506.1,348.2" fill="#9fa096" /><line x1="1514.4" y1="307.9" x2="1509.1" y2="348.2" stroke="#5f5f59" stroke-width="0.8"/><polygon points="1517.6,305.6 1520.6,305.6 1515.2,345.3 1513.7,347.3 1512.2,345.3" fill="#9fa096" /><line x1="1520.6" y1="305.6" x2="1515.2" y2="345.3" stroke="#5f5f59" stroke-width="0.8"/><polygon points="1523.8,303.4 1526.8,303.4 1521.3,342.3 1519.8,344.3 1518.3,342.3" fill="#9fa096" /><line x1="1526.8" y1="303.4" x2="1521.3" y2="342.3" stroke="#5f5f59" stroke-width="0.8"/><polygon points="1530.0,301.2 1533.0,301.2 1527.4,339.4 1525.9,341.4 1524.4,339.4" fill="#9fa096" /><line x1="1533.0" y1="301.2" x2="1527.4" y2="339.4" stroke="#5f5f59" stroke-width="0.8"/><polygon points="1536.1,299.0 1539.1,299.0 1533.5,336.4 1532.0,338.4 1530.5,336.4" fill="#9fa096" /><line x1="1539.1" y1="299.0" x2="1533.5" y2="336.4" stroke="#5f5f59" stroke-width="0.8"/><polygon points="1542.3,296.7 1545.3,296.7 1539.7,333.5 1538.2,335.5 1536.7,333.5" fill="#9fa096" /><line x1="1545.3" y1="296.7" x2="1539.7" y2="333.5" stroke="#5f5f59" stroke-width="0.8"/><polygon points="1548.5,294.5 1551.5,294.5 1545.8,330.5 1544.3,332.5 1542.8,330.5" fill="#9fa096" /><line x1="1551.5" y1="294.5" x2="1545.8" y2="330.5" stroke="#5f5f59" stroke-width="0.8"/><polygon points="929.0,171.5 1303.0,168.8 1304.5,352.0 946.4,322.3" fill="url(#gl)" stroke="#3b2016" stroke-width="0.8" /><polygon points="931.6,172.0 933.1,171.9 939.7,229.9 938.2,229.8" fill="#303135" stroke="#1b1d1c" stroke-width="0.5" /><line x1="933.9" y1="192.2" x2="935.4" y2="192.2" stroke="#1b1d1c" stroke-width="0.7"/><polygon points="937.9,171.9 940.9,171.9 947.4,230.1 944.4,230.0" fill="#303135" stroke="#1b1d1c" stroke-width="0.5" /><line x1="940.2" y1="192.3" x2="943.1" y2="192.3" stroke="#1b1d1c" stroke-width="0.7"/><polygon points="945.6,171.9 953.4,171.8 959.7,230.4 952.0,230.2" fill="#303135" stroke="#1b1d1c" stroke-width="0.5" /><line x1="947.8" y1="192.3" x2="955.6" y2="192.4" stroke="#1b1d1c" stroke-width="0.7"/><polygon points="949.1,193.1 954.9,193.2 955.6,199.6 949.8,199.6" fill="#8b7f79" /><line x1="950.3" y1="201.3" x2="950.6" y2="203.7" stroke="#6a625e" stroke-width="0.9"/><line x1="952.8" y1="201.3" x2="953.0" y2="203.8" stroke="#6a625e" stroke-width="0.9"/><polygon points="958.7,171.8 961.1,171.8 967.3,230.6 964.9,230.6" fill="#303135" stroke="#1b1d1c" stroke-width="0.5" /><line x1="960.9" y1="192.4" x2="963.2" y2="192.4" stroke="#1b1d1c" stroke-width="0.7"/><polygon points="966.4,171.7 975.4,171.7 981.4,231.0 972.5,230.8" fill="#303135" stroke="#1b1d1c" stroke-width="0.5" /><line x1="968.5" y1="192.4" x2="977.5" y2="192.5" stroke="#1b1d1c" stroke-width="0.7"/><polygon points="969.8,193.3 976.8,193.3 977.4,199.9 970.5,199.8" fill="#8b7f79" /><line x1="971.0" y1="201.5" x2="971.2" y2="204.0" stroke="#6a625e" stroke-width="0.9"/><line x1="973.4" y1="201.5" x2="973.7" y2="204.0" stroke="#6a625e" stroke-width="0.9"/><polygon points="983.1,171.6 986.1,171.6 992.0,231.3 989.0,231.2" fill="#303135" stroke="#1b1d1c" stroke-width="0.5" /><line x1="985.1" y1="192.5" x2="988.1" y2="192.5" stroke="#1b1d1c" stroke-width="0.7"/><polygon points="991.3,171.5 995.5,171.5 1001.3,231.6 997.2,231.5" fill="#303135" stroke="#1b1d1c" stroke-width="0.5" /><line x1="993.4" y1="192.6" x2="997.6" y2="192.6" stroke="#1b1d1c" stroke-width="0.7"/><polygon points="994.7,193.4 996.9,193.4 997.5,200.1 995.3,200.0" fill="#8b7f79" /><line x1="995.8" y1="201.7" x2="996.0" y2="204.3" stroke="#6a625e" stroke-width="0.9"/><line x1="998.3" y1="201.8" x2="998.5" y2="204.3" stroke="#6a625e" stroke-width="0.9"/><polygon points="1001.4,171.5 1010.9,171.4 1016.5,232.0 1007.1,231.7" fill="#303135" stroke="#1b1d1c" stroke-width="0.5" /><line x1="1003.4" y1="192.6" x2="1012.9" y2="192.7" stroke="#1b1d1c" stroke-width="0.7"/><polygon points="1004.7,193.5 1012.2,193.5 1012.8,200.2 1005.3,200.1" fill="#8b7f79" /><line x1="1005.8" y1="201.8" x2="1006.0" y2="204.4" stroke="#6a625e" stroke-width="0.9"/><line x1="1008.3" y1="201.9" x2="1008.5" y2="204.4" stroke="#6a625e" stroke-width="0.9"/><polygon points="1022.2,171.3 1032.3,171.3 1037.6,232.6 1027.6,232.3" fill="#303135" stroke="#1b1d1c" stroke-width="0.5" /><line x1="1024.1" y1="192.7" x2="1034.2" y2="192.8" stroke="#1b1d1c" stroke-width="0.7"/><polygon points="1025.4,193.6 1033.5,193.6 1034.0,200.4 1026.0,200.3" fill="#8b7f79" /><line x1="1026.5" y1="202.1" x2="1026.7" y2="204.7" stroke="#6a625e" stroke-width="0.9"/><line x1="1028.9" y1="202.1" x2="1029.2" y2="204.7" stroke="#6a625e" stroke-width="0.9"/><polygon points="1038.2,171.2 1049.5,171.1 1054.5,233.1 1043.4,232.8" fill="#303135" stroke="#1b1d1c" stroke-width="0.5" /><line x1="1040.1" y1="192.8" x2="1051.3" y2="192.9" stroke="#1b1d1c" stroke-width="0.7"/><polygon points="1041.3,193.7 1050.6,193.7 1051.1,200.6 1041.9,200.5" fill="#8b7f79" /><line x1="1042.3" y1="202.2" x2="1042.6" y2="204.8" stroke="#6a625e" stroke-width="0.9"/><line x1="1044.8" y1="202.3" x2="1045.0" y2="204.9" stroke="#6a625e" stroke-width="0.9"/><polygon points="1055.5,171.1 1067.4,171.0 1072.2,233.6 1060.4,233.2" fill="#303135" stroke="#1b1d1c" stroke-width="0.5" /><line x1="1057.3" y1="192.9" x2="1069.1" y2="193.0" stroke="#1b1d1c" stroke-width="0.7"/><polygon points="1058.5,193.8 1068.4,193.8 1068.9,200.7 1059.1,200.6" fill="#8b7f79" /><line x1="1059.5" y1="202.4" x2="1059.7" y2="205.1" stroke="#6a625e" stroke-width="0.9"/><line x1="1062.0" y1="202.4" x2="1062.2" y2="205.1" stroke="#6a625e" stroke-width="0.9"/><polygon points="1073.9,171.0 1086.4,170.9 1090.9,234.1 1078.6,233.7" fill="#303135" stroke="#1b1d1c" stroke-width="0.5" /><line x1="1075.6" y1="193.0" x2="1088.0" y2="193.1" stroke="#1b1d1c" stroke-width="0.7"/><polygon points="1076.8,193.9 1087.3,193.9 1087.8,200.9 1077.3,200.8" fill="#8b7f79" /><line x1="1077.8" y1="202.6" x2="1078.0" y2="205.3" stroke="#6a625e" stroke-width="0.9"/><line x1="1080.2" y1="202.6" x2="1080.4" y2="205.3" stroke="#6a625e" stroke-width="0.9"/><polygon points="1092.9,170.8 1099.4,170.8 1103.7,234.4 1097.3,234.3" fill="#303135" stroke="#1b1d1c" stroke-width="0.5" /><line x1="1094.5" y1="193.1" x2="1100.9" y2="193.1" stroke="#1b1d1c" stroke-width="0.7"/><polygon points="1095.7,194.0 1100.2,194.0 1100.7,201.0 1096.2,201.0" fill="#8b7f79" /><line x1="1096.6" y1="202.8" x2="1096.8" y2="205.5" stroke="#6a625e" stroke-width="0.9"/><line x1="1099.1" y1="202.8" x2="1099.3" y2="205.5" stroke="#6a625e" stroke-width="0.9"/><polygon points="1109.5,170.7 1129.3,170.6 1133.1,235.3 1113.6,234.7" fill="#303135" stroke="#1b1d1c" stroke-width="0.5" /><line x1="1111.0" y1="193.2" x2="1130.6" y2="193.3" stroke="#1b1d1c" stroke-width="0.7"/><polygon points="1112.2,194.1 1129.9,194.2 1130.3,201.3 1112.7,201.2" fill="#8b7f79" /><line x1="1113.1" y1="203.0" x2="1113.2" y2="205.7" stroke="#6a625e" stroke-width="0.9"/><line x1="1115.5" y1="203.0" x2="1115.7" y2="205.7" stroke="#6a625e" stroke-width="0.9"/><polygon points="1135.8,170.6 1151.5,170.4 1154.9,235.9 1139.5,235.4" fill="#303135" stroke="#1b1d1c" stroke-width="0.5" /><line x1="1137.1" y1="193.3" x2="1152.7" y2="193.4" stroke="#1b1d1c" stroke-width="0.7"/><polygon points="1138.3,194.2 1152.0,194.3 1152.3,201.5 1138.7,201.4" fill="#8b7f79" /><line x1="1139.1" y1="203.3" x2="1139.3" y2="206.0" stroke="#6a625e" stroke-width="0.9"/><line x1="1141.6" y1="203.3" x2="1141.8" y2="206.0" stroke="#6a625e" stroke-width="0.9"/><polygon points="1158.0,170.4 1175.0,170.3 1178.0,236.5 1161.3,236.0" fill="#303135" stroke="#1b1d1c" stroke-width="0.5" /><line x1="1159.2" y1="193.4" x2="1176.1" y2="193.5" stroke="#1b1d1c" stroke-width="0.7"/><polygon points="1160.4,194.4 1175.3,194.5 1175.6,201.8 1160.8,201.6" fill="#8b7f79" /><line x1="1161.2" y1="203.5" x2="1161.3" y2="206.3" stroke="#6a625e" stroke-width="0.9"/><line x1="1163.6" y1="203.5" x2="1163.8" y2="206.3" stroke="#6a625e" stroke-width="0.9"/><polygon points="1182.9,170.2 1190.7,170.2 1193.4,236.9 1185.7,236.7" fill="#303135" stroke="#1b1d1c" stroke-width="0.5" /><line x1="1183.9" y1="193.6" x2="1191.7" y2="193.6" stroke="#1b1d1c" stroke-width="0.7"/><polygon points="1185.1,194.5 1190.9,194.5 1191.2,201.9 1185.5,201.9" fill="#8b7f79" /><line x1="1185.8" y1="203.8" x2="1186.0" y2="206.6" stroke="#6a625e" stroke-width="0.9"/><line x1="1188.3" y1="203.8" x2="1188.4" y2="206.6" stroke="#6a625e" stroke-width="0.9"/><polygon points="1198.6,170.1 1216.9,170.0 1219.1,237.6 1201.2,237.1" fill="#303135" stroke="#1b1d1c" stroke-width="0.5" /><line x1="1199.5" y1="193.6" x2="1217.7" y2="193.7" stroke="#1b1d1c" stroke-width="0.7"/><polygon points="1200.7,194.6 1216.9,194.7 1217.2,202.2 1201.0,202.0" fill="#8b7f79" /><line x1="1201.4" y1="203.9" x2="1201.5" y2="206.8" stroke="#6a625e" stroke-width="0.9"/><line x1="1203.9" y1="203.9" x2="1204.0" y2="206.8" stroke="#6a625e" stroke-width="0.9"/><polygon points="1239.0,169.8 1260.0,169.7 1261.4,238.8 1240.8,238.3" fill="#303135" stroke="#1b1d1c" stroke-width="0.5" /><line x1="1239.6" y1="193.9" x2="1260.5" y2="194.0" stroke="#1b1d1c" stroke-width="0.7"/><polygon points="1240.9,194.8 1259.7,194.9 1259.9,202.6 1241.1,202.4" fill="#8b7f79" /><line x1="1241.4" y1="204.3" x2="1241.5" y2="207.3" stroke="#6a625e" stroke-width="0.9"/><line x1="1243.9" y1="204.4" x2="1244.0" y2="207.3" stroke="#6a625e" stroke-width="0.9"/><polygon points="1269.0,169.6 1279.6,169.6 1280.6,239.4 1270.2,239.1" fill="#303135" stroke="#1b1d1c" stroke-width="0.5" /><line x1="1269.4" y1="194.0" x2="1280.0" y2="194.1" stroke="#1b1d1c" stroke-width="0.7"/><polygon points="1270.7,195.0 1279.2,195.1 1279.3,202.8 1270.8,202.7" fill="#8b7f79" /><line x1="1271.1" y1="204.7" x2="1271.2" y2="207.6" stroke="#6a625e" stroke-width="0.9"/><line x1="1273.6" y1="204.7" x2="1273.6" y2="207.6" stroke="#6a625e" stroke-width="0.9"/><polygon points="935.1,224.3 1303.5,233.3 1303.6,239.7 935.7,229.5" fill="#a9aaa6" stroke="#4a4a48" stroke-width="0.4" /><polygon points="940.1,267.6 1303.9,286.0 1304.0,292.0 940.7,272.6" fill="#a9aaa6" stroke="#4a4a48" stroke-width="0.4" /><polygon points="1196.5,116.0 1358.5,104.6 1356.0,168.6 1196.5,169.6" fill="url(#gl)" stroke="#3b2016" stroke-width="0.8" /><line x1="1196.5" y1="135.9" x2="1357.6" y2="127.6" stroke="#3b2016" stroke-width="0.6"/><line x1="1201.2" y1="115.7" x2="1201.2" y2="169.5" stroke="#3b2016" stroke-width="0.6"/><line x1="1353.0" y1="105.0" x2="1351.5" y2="168.7" stroke="#3b2016" stroke-width="0.6"/><polygon points="1185.0,152.5 1196.5,152.5 1196.5,169.6 1185.0,169.7" fill="#874d36" stroke="#3b2016" stroke-width="0.6" /><line x1="1190.0" y1="152.5" x2="1190.0" y2="169.6" stroke="#3b2016" stroke-width="0.5"/><polygon points="1206.0,162.8 1214.0,162.8 1214.0,169.4 1206.0,169.4" fill="#8f6e60" stroke="#3b2016" stroke-width="0.4" /><polygon points="1214.0,162.8 1222.0,162.8 1222.0,169.4 1214.0,169.4" fill="#6b6867" stroke="#3b2016" stroke-width="0.4" /><polygon points="1284.0,169.0 1356.0,168.6 1358.5,104.6 1531.0,126.3 1560.0,130.0 1554.1,172.0 1569.5,171.0 1553.2,279.1 1480.0,300.0 1434.0,312.0 1289.0,350.6 1282.0,351.0" fill="url(#gr)" stroke="#3b2016" stroke-width="0.8" /><line x1="1358.5" y1="104.6" x2="1357.4" y2="168.0" stroke="#3b2016" stroke-width="0.7"/><line x1="1361.0" y1="105.0" x2="1359.5" y2="168.0" stroke="#3b2016" stroke-width="0.5"/><line x1="1359.6" y1="127.6" x2="1557.9" y2="144.8" stroke="#4a2a1d" stroke-width="0.8"/><line x1="1358.6" y1="186.0" x2="1552.5" y2="183.3" stroke="#4a2a1d" stroke-width="0.8"/><line x1="1288.7" y1="195.9" x2="1355.6" y2="194.0" stroke="#4a2a1d" stroke-width="0.9"/><line x1="1305.3" y1="169.0" x2="1302.8" y2="350.0" stroke="#4a2a1d" stroke-width="0.9"/><line x1="1300.6" y1="169.0" x2="1298.0" y2="350.0" stroke="#4a2a1d" stroke-width="0.9"/><polygon points="1360.0,129.0 1373.0,130.1 1371.7,179.0 1359.1,179.0" fill="#1b1d1c" stroke="#1b1d1c" stroke-width="0.6" /><polygon points="1360.0,129.0 1373.0,130.1 1372.3,154.5 1359.6,154.0" fill="#35363a" stroke="#1b1d1c" stroke-width="0.5" /><line x1="1360.8" y1="156.0" x2="1360.4" y2="178.0" stroke="#8c6c5f" stroke-width="1"/><polygon points="1379.0,131.5 1391.0,132.5 1389.2,180.0 1377.6,180.0" fill="#1b1d1c" stroke="#1b1d1c" stroke-width="0.6" /><polygon points="1379.0,131.5 1391.0,132.5 1390.1,156.2 1378.3,155.7" fill="#35363a" stroke="#1b1d1c" stroke-width="0.5" /><line x1="1379.5" y1="157.7" x2="1378.8" y2="179.0" stroke="#8c6c5f" stroke-width="1"/><polygon points="1397.0,133.0 1409.5,134.0 1407.3,179.5 1395.1,179.5" fill="#1b1d1c" stroke="#1b1d1c" stroke-width="0.6" /><polygon points="1397.0,133.0 1409.5,134.0 1408.4,156.7 1396.1,156.2" fill="#35363a" stroke="#1b1d1c" stroke-width="0.5" /><line x1="1397.2" y1="158.1" x2="1396.4" y2="178.6" stroke="#8c6c5f" stroke-width="1"/><polygon points="1420.9,113.9 1431.7,115.2 1425.0,224.8 1414.8,225.7" fill="#35363a" stroke="#1b1d1c" stroke-width="0.5" /><polygon points="1419.1,157.9 1428.5,158.2 1426.5,190.8 1417.3,191.0" fill="#1f2122" /><line x1="1421.0" y1="159.7" x2="1419.3" y2="189.6" stroke="#8a6b5f" stroke-width="1.9"/><line x1="1426.6" y1="159.9" x2="1424.8" y2="189.5" stroke="#4c3d38" stroke-width="1.2"/><line x1="1417.6" y1="174.4" x2="1428.1" y2="174.5" stroke="#1b1d1c" stroke-width="1.1"/><line x1="1416.7" y1="191.5" x2="1427.1" y2="191.2" stroke="#1b1d1c" stroke-width="0.9"/><polygon points="1436.4,115.8 1446.9,117.1 1439.4,223.5 1429.4,224.4" fill="#35363a" stroke="#1b1d1c" stroke-width="0.5" /><polygon points="1434.3,158.5 1443.4,158.8 1441.1,190.4 1432.2,190.6" fill="#1f2122" /><line x1="1436.1" y1="160.3" x2="1434.2" y2="189.3" stroke="#8a6b5f" stroke-width="1.9"/><line x1="1441.5" y1="160.4" x2="1439.5" y2="189.2" stroke="#4c3d38" stroke-width="1.2"/><line x1="1432.6" y1="174.5" x2="1442.8" y2="174.6" stroke="#1b1d1c" stroke-width="1.1"/><line x1="1431.6" y1="191.1" x2="1441.7" y2="190.8" stroke="#1b1d1c" stroke-width="0.9"/><polygon points="1451.7,117.7 1460.9,118.8 1452.7,222.3 1443.9,223.1" fill="#35363a" stroke="#1b1d1c" stroke-width="0.5" /><polygon points="1449.2,159.0 1457.1,159.3 1454.7,190.1 1446.9,190.3" fill="#1f2122" /><line x1="1451.1" y1="160.8" x2="1449.0" y2="189.0" stroke="#8a6b5f" stroke-width="1.9"/><line x1="1455.2" y1="160.9" x2="1453.0" y2="188.9" stroke="#4c3d38" stroke-width="1.2"/><line x1="1447.5" y1="174.6" x2="1456.5" y2="174.7" stroke="#1b1d1c" stroke-width="1.1"/><line x1="1446.3" y1="190.7" x2="1455.2" y2="190.5" stroke="#1b1d1c" stroke-width="0.9"/><polygon points="1465.9,119.4 1473.9,120.4 1465.1,221.1 1457.5,221.8" fill="#35363a" stroke="#1b1d1c" stroke-width="0.5" /><polygon points="1463.2,159.6 1469.9,159.8 1467.3,189.8 1460.7,189.9" fill="#1f2122" /><line x1="1465.0" y1="161.3" x2="1462.7" y2="188.6" stroke="#8a6b5f" stroke-width="1.9"/><line x1="1467.9" y1="161.4" x2="1465.6" y2="188.6" stroke="#4c3d38" stroke-width="1.2"/><line x1="1461.3" y1="174.7" x2="1469.1" y2="174.8" stroke="#1b1d1c" stroke-width="1.1"/><line x1="1460.0" y1="190.4" x2="1467.8" y2="190.2" stroke="#1b1d1c" stroke-width="0.9"/><polygon points="1480.9,121.3 1488.6,122.2 1479.2,219.9 1471.8,220.5" fill="#35363a" stroke="#1b1d1c" stroke-width="0.5" /><polygon points="1477.9,160.1 1484.3,160.4 1481.5,189.4 1475.2,189.6" fill="#1f2122" /><line x1="1479.7" y1="161.8" x2="1477.3" y2="188.3" stroke="#8a6b5f" stroke-width="1.9"/><line x1="1482.4" y1="161.9" x2="1479.9" y2="188.3" stroke="#4c3d38" stroke-width="1.2"/><line x1="1476.0" y1="174.8" x2="1483.5" y2="174.9" stroke="#1b1d1c" stroke-width="1.1"/><line x1="1474.6" y1="190.0" x2="1482.1" y2="189.8" stroke="#1b1d1c" stroke-width="0.9"/><polygon points="1493.9,122.9 1500.9,123.8 1491.0,218.8 1484.3,219.4" fill="#35363a" stroke="#1b1d1c" stroke-width="0.5" /><polygon points="1490.7,160.6 1496.4,160.9 1493.5,189.1 1487.8,189.3" fill="#1f2122" /><line x1="1492.5" y1="162.2" x2="1489.9" y2="188.0" stroke="#8a6b5f" stroke-width="1.9"/><line x1="1494.5" y1="162.3" x2="1491.9" y2="188.0" stroke="#4c3d38" stroke-width="1.2"/><line x1="1488.7" y1="174.9" x2="1495.5" y2="174.9" stroke="#1b1d1c" stroke-width="1.1"/><line x1="1487.2" y1="189.7" x2="1494.0" y2="189.5" stroke="#1b1d1c" stroke-width="0.9"/><polygon points="1504.6,124.2 1511.7,125.1 1501.4,217.9 1494.5,218.5" fill="#35363a" stroke="#1b1d1c" stroke-width="0.5" /><polygon points="1501.3,161.0 1507.1,161.3 1504.0,188.9 1498.3,189.0" fill="#1f2122" /><line x1="1503.1" y1="162.6" x2="1500.3" y2="187.8" stroke="#8a6b5f" stroke-width="1.9"/><line x1="1505.1" y1="162.7" x2="1502.4" y2="187.8" stroke="#4c3d38" stroke-width="1.2"/><line x1="1499.2" y1="175.0" x2="1506.1" y2="175.0" stroke="#1b1d1c" stroke-width="1.1"/><line x1="1497.6" y1="189.4" x2="1504.6" y2="189.2" stroke="#1b1d1c" stroke-width="0.9"/><polygon points="1514.9,125.5 1521.9,126.3 1511.3,217.0 1504.5,217.6" fill="#35363a" stroke="#1b1d1c" stroke-width="0.5" /><polygon points="1511.4,161.4 1517.1,161.7 1514.0,188.6 1508.3,188.7" fill="#1f2122" /><line x1="1513.2" y1="163.0" x2="1510.4" y2="187.6" stroke="#8a6b5f" stroke-width="1.9"/><line x1="1515.2" y1="163.0" x2="1512.4" y2="187.5" stroke="#4c3d38" stroke-width="1.2"/><line x1="1509.3" y1="175.0" x2="1516.2" y2="175.1" stroke="#1b1d1c" stroke-width="1.1"/><line x1="1507.7" y1="189.1" x2="1514.5" y2="189.0" stroke="#1b1d1c" stroke-width="0.9"/><polygon points="1526.0,143.0 1532.4,143.5 1528.2,177.5 1521.8,177.5" fill="#26282a" stroke="#1b1d1c" stroke-width="0.5" /><polygon points="1526.0,143.0 1532.4,143.5 1530.7,157.7 1524.3,157.4" fill="#35363a" stroke="#1b1d1c" stroke-width="0.4" /><line x1="1525.7" y1="158.9" x2="1523.5" y2="176.8" stroke="#6d5248" stroke-width="0.9"/><polygon points="1534.5,144.5 1540.9,145.0 1536.6,178.0 1530.3,178.0" fill="#26282a" stroke="#1b1d1c" stroke-width="0.5" /><polygon points="1534.5,144.5 1540.9,145.0 1539.1,158.8 1532.7,158.5" fill="#35363a" stroke="#1b1d1c" stroke-width="0.4" /><line x1="1534.1" y1="160.0" x2="1531.9" y2="177.3" stroke="#6d5248" stroke-width="0.9"/><polygon points="1543.5,146.0 1549.3,146.5 1545.1,178.0 1539.3,178.0" fill="#26282a" stroke="#1b1d1c" stroke-width="0.5" /><polygon points="1543.5,146.0 1549.3,146.5 1547.5,159.6 1541.7,159.4" fill="#35363a" stroke="#1b1d1c" stroke-width="0.4" /><line x1="1543.1" y1="160.8" x2="1540.9" y2="177.3" stroke="#6d5248" stroke-width="0.9"/><polygon points="1521.5,184.0 1525.5,183.9 1522.0,212.0 1518.1,212.3" fill="#2a2b2e" stroke="#1b1d1c" stroke-width="0.5" /><polygon points="1530.5,184.0 1536.0,183.9 1532.2,212.9 1526.8,213.3" fill="#2a2b2e" stroke="#1b1d1c" stroke-width="0.5" /><polygon points="1539.0,183.5 1544.0,183.4 1540.2,211.9 1535.2,212.3" fill="#2a2b2e" stroke="#1b1d1c" stroke-width="0.5" /><line x1="1556" y1="173" x2="1547" y2="245" stroke="#3b2016" stroke-width="0.5" stroke-dasharray="3 2"/><line x1="1561" y1="173" x2="1552" y2="245" stroke="#3b2016" stroke-width="0.5" stroke-dasharray="3 2"/><line x1="1551.0" y1="188.0" x2="1567.0" y2="186.5" stroke="#3b2016" stroke-width="0.5"/><polygon points="1356.8,187.6 1363.5,187.5 1362.6,229.5 1356.1,230.1" fill="#2a2b2e" stroke="#1b1d1c" stroke-width="0.5" /><polygon points="1375.0,187.6 1389.0,187.4 1387.5,227.9 1373.8,229.1" fill="#35363a" stroke="#1b1d1c" stroke-width="0.5" /><polygon points="1399.0,186.5 1407.0,186.4 1405.2,224.5 1397.3,225.1" fill="#2a2b2e" stroke="#1b1d1c" stroke-width="0.5" /><polygon points="1354.5,240.6 1360.0,240.0 1359.3,277.2 1353.9,278.1" fill="#2a2b2e" stroke="#1b1d1c" stroke-width="0.5" /><line x1="1356.2" y1="247.4" x2="1355.7" y2="276.8" stroke="#8c6c5f" stroke-width="1"/><polygon points="1354.5,240.6 1360.0,240.0 1359.9,246.0 1354.4,246.6" fill="#35363a" /><polygon points="1373.0,243.0 1384.7,241.7 1383.7,271.7 1372.1,273.6" fill="#2a2b2e" stroke="#1b1d1c" stroke-width="0.5" /><line x1="1374.7" y1="249.6" x2="1374.0" y2="272.4" stroke="#8c6c5f" stroke-width="1"/><polygon points="1373.0,243.0 1384.7,241.7 1384.5,247.4 1372.8,248.8" fill="#35363a" /><polygon points="1390.6,241.8 1401.1,240.6 1399.7,269.5 1389.4,271.2" fill="#2a2b2e" stroke="#1b1d1c" stroke-width="0.5" /><line x1="1392.2" y1="248.2" x2="1391.3" y2="269.9" stroke="#8c6c5f" stroke-width="1"/><polygon points="1390.6,241.8 1401.1,240.6 1400.8,246.1 1390.4,247.5" fill="#35363a" /><polygon points="1410.6,233.5 1421.1,232.4 1418.2,281.5 1408.0,283.5" fill="#35363a" stroke="#1b1d1c" stroke-width="0.5" /><polygon points="1426.0,231.0 1436.6,229.9 1432.5,288.6 1422.3,290.8" fill="#35363a" stroke="#1b1d1c" stroke-width="0.5" /><polygon points="1441.0,229.0 1450.7,228.0 1448.1,260.6 1438.6,262.2" fill="#2a2b2e" stroke="#1b1d1c" stroke-width="0.5" /><line x1="1442.5" y1="234.8" x2="1440.5" y2="261.0" stroke="#8c6c5f" stroke-width="1"/><polygon points="1441.0,229.0 1450.7,228.0 1450.3,233.1 1440.6,234.2" fill="#35363a" /><polygon points="1453.0,227.6 1462.5,226.6 1459.8,258.3 1450.4,259.8" fill="#2a2b2e" stroke="#1b1d1c" stroke-width="0.5" /><line x1="1454.4" y1="233.3" x2="1452.4" y2="258.7" stroke="#8c6c5f" stroke-width="1"/><polygon points="1453.0,227.6 1462.5,226.6 1462.1,231.6 1452.6,232.6" fill="#35363a" /><polygon points="1469.4,225.3 1476.6,224.6 1473.6,255.3 1466.6,256.5" fill="#2a2b2e" stroke="#1b1d1c" stroke-width="0.5" /><line x1="1470.8" y1="230.8" x2="1468.5" y2="255.3" stroke="#8c6c5f" stroke-width="1"/><polygon points="1469.4,225.3 1476.6,224.6 1476.1,229.4 1469.0,230.2" fill="#35363a" /><polygon points="1481.0,224.0 1488.1,223.3 1484.9,254.0 1477.9,255.2" fill="#2a2b2e" stroke="#1b1d1c" stroke-width="0.5" /><line x1="1482.4" y1="229.3" x2="1479.9" y2="254.1" stroke="#8c6c5f" stroke-width="1"/><polygon points="1481.0,224.0 1488.1,223.3 1487.6,228.0 1480.5,228.8" fill="#35363a" /><polygon points="1493.0,223.0 1500.1,222.3 1496.8,251.8 1489.8,252.9" fill="#2a2b2e" stroke="#1b1d1c" stroke-width="0.5" /><line x1="1494.3" y1="228.2" x2="1491.8" y2="251.8" stroke="#8c6c5f" stroke-width="1"/><polygon points="1493.0,223.0 1500.1,222.3 1499.6,226.9 1492.5,227.6" fill="#35363a" /><polygon points="1504.7,221.8 1510.7,221.2 1507.3,249.6 1501.4,250.5" fill="#2a2b2e" stroke="#1b1d1c" stroke-width="0.5" /><line x1="1506.0" y1="226.9" x2="1503.4" y2="249.5" stroke="#8c6c5f" stroke-width="1"/><polygon points="1504.7,221.8 1510.7,221.2 1510.1,225.7 1504.2,226.3" fill="#35363a" /><polygon points="1515.3,220.6 1522.5,219.9 1519.1,247.0 1512.0,248.1" fill="#2a2b2e" stroke="#1b1d1c" stroke-width="0.5" /><line x1="1516.6" y1="225.5" x2="1514.0" y2="247.1" stroke="#8c6c5f" stroke-width="1"/><polygon points="1515.3,220.6 1522.5,219.9 1521.9,224.2 1514.8,225.0" fill="#35363a" /><polygon points="1524.7,219.4 1530.7,218.8 1527.1,246.1 1521.2,247.1" fill="#2a2b2e" stroke="#1b1d1c" stroke-width="0.5" /><line x1="1526.0" y1="224.2" x2="1523.2" y2="246.0" stroke="#8c6c5f" stroke-width="1"/><polygon points="1524.7,219.4 1530.7,218.8 1530.1,223.1 1524.2,223.7" fill="#35363a" /><polygon points="1534.0,218.0 1540.1,217.4 1536.5,243.6 1530.5,244.6" fill="#2a2b2e" stroke="#1b1d1c" stroke-width="0.5" /><line x1="1535.3" y1="222.7" x2="1532.5" y2="243.5" stroke="#8c6c5f" stroke-width="1"/><polygon points="1534.0,218.0 1540.1,217.4 1539.5,221.6 1533.4,222.2" fill="#35363a" /><polygon points="1350.6,293.5 1357.6,292.1 1357.0,327.4 1350.1,329.1" fill="#2c2d30" stroke="#1b1d1c" stroke-width="0.5" /><polygon points="1368.2,288.8 1376.6,287.2 1375.5,320.0 1367.4,322.0" fill="#2c2d30" stroke="#1b1d1c" stroke-width="0.5" /><polygon points="1381.2,286.5 1386.0,285.6 1384.8,318.5 1380.1,319.7" fill="#2c2d30" stroke="#1b1d1c" stroke-width="0.5" /><polygon points="1390.6,284.0 1397.7,282.6 1396.2,315.6 1389.3,317.3" fill="#2c2d30" stroke="#1b1d1c" stroke-width="0.5" /><polygon points="1408.2,277.0 1414.1,275.9 1412.1,311.4 1406.3,312.9" fill="#2c2d30" stroke="#1b1d1c" stroke-width="0.5" /><polygon points="1418.8,274.7 1424.8,273.6 1422.5,309.1 1416.7,310.5" fill="#2c2d30" stroke="#1b1d1c" stroke-width="0.5" /><polygon points="1428.2,272.4 1433.1,271.5 1430.5,308.2 1425.8,309.4" fill="#2c2d30" stroke="#1b1d1c" stroke-width="0.5" /><polygon points="1490.0,262.0 1495.1,261.0 1491.9,290.5 1486.8,291.8" fill="#2c2d30" stroke="#1b1d1c" stroke-width="0.5" /><polygon points="1500.0,260.0 1505.1,259.0 1501.8,287.6 1496.7,288.8" fill="#2c2d30" stroke="#1b1d1c" stroke-width="0.5" /><polygon points="1510.0,258.0 1515.1,257.1 1511.7,284.6 1506.7,285.8" fill="#2c2d30" stroke="#1b1d1c" stroke-width="0.5" /><polygon points="1520.0,255.0 1525.1,254.1 1521.6,281.6 1516.5,282.9" fill="#2c2d30" stroke="#1b1d1c" stroke-width="0.5" /><polygon points="1529.0,253.0 1534.1,252.1 1530.5,278.6 1525.5,279.9" fill="#2c2d30" stroke="#1b1d1c" stroke-width="0.5" /><polygon points="1284.4,238.1 1565.8,212.3 1565.2,216.3 1284.6,244.9" fill="#a9aaa6" stroke="#4a4a48" stroke-width="0.5" /><polygon points="1286.0,290.6 1561.1,243.3 1560.5,247.1 1286.2,296.9" fill="#a9aaa6" stroke="#4a4a48" stroke-width="0.5" /><polygon points="1500.5,253.3 1513.0,254.6 1531.3,250.3 1531.3,254.1 1513.0,258.3 1500.5,256.6" fill="#2f3033" stroke="#1b1d1c" stroke-width="0.5" /><polygon points="1500.5,253.3 1518.0,249.6 1531.3,250.3 1513.0,254.6" fill="#48494c" stroke="#1b1d1c" stroke-width="0.5" /><polygon points="1328.2,286.5 1343.5,289.0 1381.0,280.6 1381.0,285.0 1342.0,295.0 1328.2,292.5" fill="#2f3033" stroke="#1b1d1c" stroke-width="0.5" /><polygon points="1328.2,286.5 1366.0,278.2 1381.0,280.6 1343.5,289.0" fill="#48494c" stroke="#1b1d1c" stroke-width="0.5" /><polygon points="1434.0,291.0 1447.0,290.0 1466.0,287.0 1480.0,290.0 1480.0,326.0 1434.0,346.0" fill="#3b3c3e" /><polygon points="1449.5,268.0 1467.0,265.0 1465.0,305.0 1447.0,306.0" fill="#3a3b3f" stroke="#1b1d1c" stroke-width="0.5" /><polygon points="1446.5,306.0 1461.5,304.5 1460.5,328.0 1446.0,329.0" fill="#b6b4af" /><polygon points="1454.0,305.3 1461.5,304.5 1460.5,328.0 1453.5,328.6" fill="#9c9a96" /><polygon points="1441.0,327.0 1463.5,324.5 1463.5,331.0 1441.0,333.0" fill="#c4c2bd" stroke="#6a6a66" stroke-width="0.4" /><polygon points="1289.0,347.6 1434.0,308.8 1431.0,345.5 1289.4,391.5" fill="#38393b" stroke="#202122" stroke-width="0.7" /><polygon points="1480.0,296.0 1554.0,273.5 1552.6,299.6 1480.0,325.5" fill="#38393b" stroke="#202122" stroke-width="0.7" /><polygon points="1331.8,354.7 1355.3,333.5 1360.0,321.8 1374.0,326.5 1374.0,337.0 1350.6,357.0" fill="#6c6d6f" /><polygon points="1360.0,321.8 1374.0,326.5 1374.0,337.0 1358.0,336.0" fill="#57585a" /><polygon points="1501.0,298.0 1517.6,286.5 1518.8,279.4 1529.4,281.8 1529.4,290.0 1520.0,299.4" fill="#6c6d6f" /><polygon points="1518.8,279.4 1529.4,281.8 1529.4,290.0 1517.6,288.0" fill="#57585a" /><rect x="1318" y="350" width="4" height="5" fill="#141414"/><rect x="1496" y="296" width="3" height="4" fill="#141414"/><rect x="1541" y="283" width="3" height="4" fill="#141414"/><polygon points="1531.1,87.8 1569.3,82.3 1609.5,86.9 1574.0,94.1" fill="#a0a0a0" stroke="#3c3c3c" stroke-width="0.8" /><polygon points="1531.1,87.8 1574.0,94.1 1574.0,158.5 1537.0,136.5" fill="#9d9d9d" stroke="#3c3c3c" stroke-width="0.8" /><polygon points="1574.0,94.1 1609.5,86.9 1604.7,134.9 1574.0,158.5" fill="#999999" stroke="#3c3c3c" stroke-width="0.8" /><text transform="matrix(0.40,0.150,0.10,1,1540,124)" font-family="Liberation Sans" font-size="18" fill="#5a5a5a" fill-opacity=".9">Справа</text><text transform="matrix(0.36,-0.215,-0.04,1,1582.500,132)" font-family="Liberation Sans" font-size="20" fill="#5a5a5a" fill-opacity=".9">Сзади</text></svg>
<div class="r" style="left:866px;top:38px;width:32px;height:32px;background:#3c3c3c;"></div>
<svg class="r" style="left:866px;top:38px;" width="32" height="32" viewBox="0 0 32 32"><path d="M4.600 12V4.600H12M20 4.600H27.400V12M27.400 20V27.400H20M12 27.400H4.600V20" fill="none" stroke="#a2a2a2" stroke-width="1.400"/><path d="M16 9.200l6 3.450v6.900L16 23l-6-3.450v-6.900z" fill="#8c8c8c"/></svg>
<div class="r" style="left:866px;top:461px;width:772px;height:36px;background:#3c3c3c;border-radius:4px 4px 0 0"></div>
<div class="r" style="left:866px;top:497px;width:772px;height:33px;background:#484848;"></div>
<div class="r" style="left:866px;top:530px;width:772px;height:308px;background:#999999;"></div>
<div class="r" style="left:866px;top:838px;width:772px;height:8px;background:#3c3c3c;"></div>
<div class="r" style="left:1301px;top:497px;width:1px;height:33px;background:#3a3a3a;"></div>
<div class="r" style="left:1494px;top:497px;width:1px;height:33px;background:#3a3a3a;"></div>
<div class="t" style="left:1318.0px;top:507.84px;font-size:12px;color:#9c9c9c;font-weight:700;letter-spacing:-0.216px;">Элемент (Модель B)</div>
<div class="r" style="left:1510.7px;top:497px;width:127.3px;height:33px;overflow:hidden"><div class="t" style="left:0;top:10.8px;font-size:12px;font-weight:700;color:#9c9c9c;letter-spacing:-0.47px">GUID элемента (Модель B)</div></div>
<div class="r" style="left:1535.7px;top:534px;width:102.300px;height:24px;overflow:hidden"><div class="t" style="left:0;top:4.650px;font-size:14px;color:#6c6c6c;letter-spacing:0.04px">Отсутствуют данные</div></div>
<svg class="r" style="left:1603.7px;top:471.6px;" width="20" height="20" viewBox="0 0 24 24"><path d="M7.41,8.58L12,13.17L16.59,8.58L18,10L12,16L6,10L7.41,8.58Z" fill="#9aa6ac"/></svg>
<svg class="r" style="left:1569.4px;top:472.1px;" width="20" height="20" viewBox="0 0 24 24"><path d="M19.14 12.94c.04-.3.06-.61.06-.94 0-.32-.02-.64-.07-.94l2.03-1.58c.18-.14.23-.41.12-.61l-1.92-3.32c-.12-.22-.37-.29-.59-.22l-2.39.96c-.5-.38-1.03-.7-1.62-.94l-.36-2.54c-.04-.24-.24-.41-.48-.41h-3.84c-.24 0-.43.17-.47.41l-.36 2.54c-.59.24-1.13.57-1.62.94l-2.39-.96c-.22-.08-.47 0-.59.22L2.74 8.87c-.12.21-.08.47.12.61l2.03 1.58c-.05.3-.09.63-.09.94s.02.64.07.94l-2.03 1.58c-.18.14-.23.41-.12.61l1.92 3.32c.12.22.37.29.59.22l2.39-.96c.5.38 1.03.7 1.62.94l.36 2.54c.05.24.24.41.48.41h3.84c.24 0 .44-.17.47-.41l.36-2.54c.59-.24 1.13-.56 1.62-.94l2.39.96c.22.08.47 0 .59-.22l1.92-3.32c.12-.22.07-.47-.12-.61l-2.01-1.58zM12 15.6c-1.98 0-3.6-1.62-3.6-3.6s1.62-3.6 3.6-3.6 3.6 1.62 3.6 3.6-1.62 3.6-3.6 3.6z" fill="#8f8f8f"/></svg>
<svg class="r" style="left:1460px;top:466px;" width="100" height="30" viewBox="0 0 100 30"><g fill="none" stroke="#8f8f8f" stroke-width="1.500" stroke-linejoin="round">
<path d="M19.500 18.500H11a1.800 1.800 0 0 1-1.800-1.800V8.700A1.800 1.800 0 0 1 11 6.900h9.500a1.800 1.800 0 0 1 1.800 1.800V11"/>
<path d="M14 12H23a1.800 1.800 0 0 1 1.800 1.800V21a1.800 1.800 0 0 1-1.800 1.800H15.500a1.800 1.800 0 0 1-1.800-1.800V18"/></g>
<g fill="#8f8f8f"><rect x="45" y="7.200" width="14" height="1.700"/><rect x="45" y="21.900" width="14" height="1.700"/>
<path d="M52 9.700l3.300 3.500h-2.500v4.600h2.500L52 21.300l-3.300-3.500h2.500v-4.600h-2.500z"/>
<rect x="79.200" y="13.400" width="13.800" height="1.300"/><rect x="79.200" y="15.600" width="13.800" height="1.300"/>
<path d="M86.100 12.700l-3.100-3.200h2.350V6h1.500v3.500h2.350z"/><path d="M86.100 17.600l3.100 3.200h-2.350v3.200h-1.500v-3.200h-2.350z"/></g></svg>
<div class="r" style="left:877px;top:839.500px;width:393px;height:6px;border-radius:3px;background:#2e6173"></div>
<div class="r" style="left:868px;top:839px;width:0;height:0;border:3.5px solid transparent;border-right:4px solid #2c6c84;border-left:none"></div>
<div class="r" style="left:1631px;top:839px;width:0;height:0;border:3.5px solid transparent;border-left:4px solid #2c6c84;border-right:none"></div>
<div class="r" style="left:1646px;top:38px;width:37px;height:812px;background:#3c3c3c;"></div>
<div class="r" style="left:1646px;top:130px;width:37px;height:1px;background:#2f2f2f;"></div>
<div class="r" style="left:1646px;top:398.5px;width:37px;height:1px;background:#2f2f2f;"></div>
<div class="r" style="left:1646px;top:447.5px;width:37px;height:1px;background:#2f2f2f;"></div>
<div class="r" style="left:1646px;top:628.5px;width:37px;height:1px;background:#2f2f2f;"></div>
<div class="r" style="left:1646px;top:722px;width:37px;height:1px;background:#2f2f2f;"></div>
<div class="r" style="left:1648.3px;top:638px;width:31.7px;height:32.1px;background:#5a5a5a;"></div>
<div class="r" style="left:1648.3px;top:682px;width:31.7px;height:31.5px;background:#5a5a5a;"></div>
<svg class="r" style="left:1646px;top:44.0px" width="37" height="36" viewBox="0 0 37 36" fill="none" stroke="#8f8f8f" stroke-width="1.2" stroke-linecap="round" stroke-linejoin="round"><path d="M14 24.200H12.200C9.300 24.200 7.200 22.100 7.200 19.500 7.200 17 9 15.100 11.400 14.900 11.200 14.300 11.200 13.800 11.200 13.300 11.200 9.600 14.300 6.600 18.300 6.600S25.400 9.600 25.400 13.300C25.400 13.800 25.400 14.300 25.300 14.900 27.700 15.100 29.600 17 29.600 19.500 29.600 22.100 27.500 24.200 24.600 24.200H22.800"/><path d="M18.400 30V12.500M18.400 19.300l-4.300-3.200M18.400 17.500l3.200-2.600M18.400 23.600l-3.800-2.800M18.400 22l4.200-3.300"/></svg>
<svg class="r" style="left:1646px;top:87.5px" width="37" height="36" viewBox="0 0 37 36" fill="none" stroke="#8f8f8f" stroke-width="1.2" stroke-linecap="round" stroke-linejoin="round"><path d="M13.400 23H5.200V5.800H28.900V12.600M13.400 23V25.900H9.900" stroke-linecap="butt" stroke-linejoin="miter"/><path d="M15.300 19.400V14.800H19.900M26.300 14.800H30.900V19.400M30.900 26.500V31.100H26.300M19.900 31.100H15.300V26.500" stroke-linecap="butt" stroke-linejoin="miter"/><path d="M22.900 18.300l4.200 2.400v4.900l-4.200 2.400-4.200-2.400v-4.900z" fill="#8f8f8f" stroke="none"/></svg>
<svg class="r" style="left:1646px;top:137.0px" width="37" height="36" viewBox="0 0 37 36" fill="none" stroke="#8f8f8f" stroke-width="1.2" stroke-linecap="round" stroke-linejoin="round"><rect x="4.800" y="11.600" width="27" height="9.600" rx="1" stroke-width="1.300"/><path d="M9 21v-4M13.700 21v-2.500M18.300 21v-4M23 21v-2.500M27.600 21v-4" stroke-width="1.100"/><path d="M4.600 24H32" stroke-width="1.200"/></svg>
<svg class="r" style="left:1646px;top:180.5px" width="37" height="36" viewBox="0 0 37 36" fill="none" stroke="#8f8f8f" stroke-width="1.2" stroke-linecap="round" stroke-linejoin="round"><path d="M4.400 21.100L14 15.100H31.600L22 21.100Z" stroke-width="1.100"/><path d="M13 14.500L23.600 4.500V24.500L13 32.500Z" fill="#8f8f8f" stroke="none"/></svg>
<svg class="r" style="left:1646px;top:225.0px" width="37" height="36" viewBox="0 0 37 36" fill="none" stroke="#8f8f8f" stroke-width="1.2" stroke-linecap="round" stroke-linejoin="round"><path d="M6.400 11H24V28H6.400ZM13 7H30V24M6.400 11L13 7M24 11L30 7M24 28L30 24M13 7V24H30M6.400 28L13 24" stroke-width="1"/><path d="M15 11L21 7V24L15 28Z" fill="#8f8f8f" fill-opacity=".75" stroke="none"/></svg>
<svg class="r" style="left:1646px;top:269.0px" width="37" height="36" viewBox="0 0 37 36" fill="none" stroke="#8f8f8f" stroke-width="1.2" stroke-linecap="round" stroke-linejoin="round"><path d="M6.500 7.500H30.500V28.500H4.500V10Z" stroke-width="1.300"/><path d="M4.500 17.500H30.500M17.500 7.500V28.500" stroke-width="1" stroke-dasharray="2.500 1.500"/><path d="M24 28v-3.500h6.500V28z" fill="#8f8f8f" stroke="none"/></svg>
<svg class="r" style="left:1646px;top:313.0px" width="37" height="36" viewBox="0 0 37 36" fill="none" stroke="#8f8f8f" stroke-width="1.2" stroke-linecap="round" stroke-linejoin="round"><circle cx="17.800" cy="18" r="7.500" stroke-width="2.400"/><circle cx="17.800" cy="18" r="4" fill="#8f8f8f" stroke="none"/><path d="M17.800 6.800V9.300M17.800 26.700V29.200M6.600 18H9.100M26.500 18H29" stroke-width="1.500" stroke-linecap="butt"/></svg>
<svg class="r" style="left:1646px;top:356.7px" width="37" height="36" viewBox="0 0 37 36" fill="none" stroke="#8f8f8f" stroke-width="1.2" stroke-linecap="round" stroke-linejoin="round"><circle cx="18" cy="18" r="12.600" stroke-width="1.100"/><path d="M12.500 25.500V12.600C15 10.600 17.500 10.900 19.500 12.100S23.500 13.600 25.800 12.400V19.600C23.500 20.800 21.500 20.300 19.500 19.300S15 18.100 12.500 19.900" stroke-width="1.200"/></svg>
<svg class="r" style="left:1646px;top:406.0px" width="37" height="36" viewBox="0 0 37 36" fill="none" stroke="#8f8f8f" stroke-width="1.2" stroke-linecap="round" stroke-linejoin="round"><path d="M2.800 21.600L32.800 5.400M2.800 31.800L32.800 15.400M12.500 10.200L31.900 20.700M3.700 16.300L23.100 26.900" stroke-width="1"/><text x="3" y="15" font-family="Liberation Sans" font-size="5.500" fill="#8f8f8f" stroke="none">1</text><text x="13.300" y="7.800" font-family="Liberation Sans" font-size="5.500" fill="#8f8f8f" stroke="none">2</text></svg>
<svg class="r" style="left:1646px;top:455.0px" width="37" height="36" viewBox="0 0 37 36" fill="none" stroke="#8f8f8f" stroke-width="1.2" stroke-linecap="round" stroke-linejoin="round"><rect x="6.500" y="6.500" width="23" height="23" stroke-width="1.100" stroke-dasharray="1.700 1.500" stroke-linecap="butt"/><path d="M18 11.500l5.500 3.100v6.400L18 24.500l-5.500-3.500v-6.400zM12.500 14.600L18 18l5.500-3.400M18 18v6.500" stroke-width="1"/></svg>
<svg class="r" style="left:1646px;top:499.0px" width="37" height="36" viewBox="0 0 37 36" fill="none" stroke="#8f8f8f" stroke-width="1.2" stroke-linecap="round" stroke-linejoin="round"><rect x="6.500" y="6.500" width="23" height="23" stroke-width="1.100" stroke-dasharray="1.700 1.500" stroke-linecap="butt"/><path d="M10.800 18C12.500 14.500 15 13 18 13S23.500 14.500 25.200 18C23.500 21.500 21 23 18 23S12.500 21.500 10.800 18Z" fill="#8f8f8f" stroke="none"/><circle cx="18" cy="18" r="2.900" fill="#3c3c3c" stroke="none"/><circle cx="18" cy="18" r="1.500" fill="#8f8f8f" stroke="none"/></svg>
<svg class="r" style="left:1646px;top:543.0px" width="37" height="36" viewBox="0 0 37 36" fill="none" stroke="#8f8f8f" stroke-width="1.2" stroke-linecap="round" stroke-linejoin="round"><rect x="6.500" y="6.500" width="23" height="23" stroke-width="1.100" stroke-dasharray="1.700 1.500" stroke-linecap="butt"/><path d="M10.800 18C12.500 14.500 15 13 18 13S23.500 14.500 25.200 18C23.500 21.500 21 23 18 23S12.500 21.500 10.800 18Z" fill="#8f8f8f" stroke="none"/><circle cx="18" cy="18" r="2.900" fill="#3c3c3c" stroke="none"/><circle cx="18" cy="18" r="1.500" fill="#8f8f8f" stroke="none"/><path d="M11.500 11.500L25 25" stroke="#3c3c3c" stroke-width="3"/><path d="M11 12.500L24 25.500" stroke-width="1.400"/></svg>
<svg class="r" style="left:1646px;top:586.8px" width="37" height="36" viewBox="0 0 37 36" fill="none" stroke="#8f8f8f" stroke-width="1.2" stroke-linecap="round" stroke-linejoin="round"><path d="M14.500 29.500H6.500V6.500H29.500V15" stroke-width="1.100" stroke-dasharray="1.700 1.500" stroke-linecap="butt"/><rect x="15.800" y="15.800" width="16" height="16" fill="#8f8f8f" stroke="none"/><path d="M19.800 19.800l8 8M27.800 19.800l-8 8" stroke="#333" stroke-width="1.200"/></svg>
<svg class="r" style="left:1646px;top:636px" width="37" height="36" viewBox="0 0 37 36" stroke="#8e8e8e" stroke-width="0.900" stroke-linejoin="round"><path d="M6.300 9.200L18 6.600 29.200 9.400 18 14Z" fill="#626262"/><path d="M6.300 9.200L18 14V29.900L7.600 23.400Z" fill="#8e8e8e"/><path d="M18 14L29.200 9.400 28.300 22.400 18 29.900Z" fill="#565656"/></svg>
<svg class="r" style="left:1646px;top:680px" width="37" height="36" viewBox="0 0 37 36" fill="none" stroke="#8e8e8e" stroke-width="1.800"><ellipse cx="18" cy="17.500" rx="11.300" ry="5.900"/><ellipse cx="18" cy="17.500" rx="4.700" ry="10.700"/><path d="M18 17l-2.700 3.900M18 17l3.300 3.900" stroke-width="0.900" stroke="#b0b0b0"/></svg>
<svg class="r" style="left:1646px;top:840px" width="10" height="10"><path d="M2 3V8H7Z" fill="#a8a8a8"/></svg>
<div class="r" style="left:389.3px;top:206px;width:899.5px;height:438.500px;background:#666666;box-shadow:0 11px 15px -7px rgba(0,0,0,.2),0 24px 38px 3px rgba(0,0,0,.14),0 9px 46px 8px rgba(0,0,0,.12)"></div>
<div class="r" style="left:389.3px;top:206px;width:899.5px;height:44px;background:#555555;"></div>
<div class="r" style="left:393px;top:288px;width:892.3px;height:353px;background:#ffffff;"></div>
<div class="t" style="left:397.0px;top:219.85px;font-size:14px;color:#ffffff;letter-spacing:-0.010px;">Выбор атрибута</div>
<svg class="r" style="left:1259px;top:216px;" width="24" height="24" viewBox="0 0 24 24"><path d="M4.900 5L19.200 19M19.200 5L4.900 19" stroke="#ffffff" stroke-width="1.800" fill="none"/></svg>
<div class="t" style="left:400.0px;top:261.15px;font-size:14px;color:#ececec;font-weight:700;letter-spacing:-0.460px;">Выбор параметра</div>
<div class="t" style="left:550.0px;top:261.15px;font-size:14px;color:#ececec;font-weight:700;letter-spacing:-0.392px;">Выбор класса/атрибута</div>
<div class="t" style="left:921.5px;top:261.15px;font-size:14px;color:#ececec;font-weight:700;letter-spacing:-0.636px;">Выбор сравнения</div>
<div class="t" style="left:1070.0px;top:261.15px;font-size:14px;color:#ececec;font-weight:700;letter-spacing:-0.516px;">Выбор значения</div>
<div class="r" style="left:542px;top:288px;width:1px;height:300px;background:#6e6e6e;"></div>
<div class="r" style="left:913px;top:288px;width:1px;height:300px;background:#6e6e6e;"></div>
<div class="r" style="left:1061.7px;top:288px;width:1px;height:300px;background:#6e6e6e;"></div>
<div class="r" style="left:393px;top:587.7px;width:892.3px;height:1px;background:#6e6e6e;"></div>
<div class="t" style="left:401.4px;top:297.54px;font-size:12px;color:#3b8fad;letter-spacing:-0.019px;">Атрибут</div>
<div class="r" style="left:551px;top:296px;width:352px;height:38px;border:1px solid #939393;border-radius:4px;box-sizing:content-box"></div>
<div class="t" style="left:563.0px;top:307.00px;font-size:13px;color:#5e5e5e;letter-spacing:0.570px;">поиск</div>
<svg class="r" style="left:565px;top:354px;" width="24" height="24" viewBox="0 0 24 24"><path d="M15.41 7.41L14 6l-6 6 6 6 1.41-1.41L10.83 12z" fill="#8c8c8c"/></svg>
<svg class="r" style="left:867px;top:354px;" width="24" height="24" viewBox="0 0 24 24"><path d="M10 6L8.59 7.41 13.17 12l-4.58 4.59L10 18l6-6z" fill="#585858"/></svg>
<div class="t" style="left:619.0px;top:358.75px;font-size:14px;color:#767676;letter-spacing:1.642px;">Базовые</div>
<div class="t" style="left:717.5px;top:358.75px;font-size:14px;color:#2a2a2a;letter-spacing:1.390px;">Наборы</div>
<div class="t" style="left:810.0px;top:358.75px;font-size:14px;color:#767676;letter-spacing:1.404px;">Униве</div>
<div class="r" style="left:702px;top:376px;width:92px;height:2px;background:#2a2a2a;"></div>
<div class="t" style="left:583.0px;top:399.84px;font-size:12px;color:#151515;letter-spacing:0.015px;">2.1. Внешний диаметр</div>
<div class="t" style="left:583.0px;top:423.84px;font-size:12px;color:#3b8fad;letter-spacing:0.076px;">3. Длина</div>
<div class="t" style="left:583.0px;top:447.84px;font-size:12px;color:#151515;letter-spacing:0.103px;">4. Имя системы</div>
<div class="t" style="left:583.0px;top:471.84px;font-size:12px;color:#151515;letter-spacing:0.064px;">5. Сокращение для системы</div>
<div class="t" style="left:583.0px;top:495.84px;font-size:12px;color:#151515;letter-spacing:0.074px;">6. Классификация систем</div>
<div class="t" style="left:583.0px;top:519.84px;font-size:12px;color:#151515;letter-spacing:0.037px;">7. Отметка дна</div>
<div class="t" style="left:583.0px;top:543.84px;font-size:12px;color:#151515;letter-spacing:0.017px;">8. Тип соединения</div>
<div class="t" style="left:583.0px;top:567.84px;font-size:12px;color:#151515;letter-spacing:0.105px;">9. Толщина изоляции</div>
<div class="r" style="left:583px;top:386.100px;width:140px;height:3px;overflow:hidden"><div class="t" style="left:0;top:-10.300px;font-size:12px;color:#151515;letter-spacing:-0.120px">2. Внутренний диаметр</div></div>
<div class="r" style="left:890px;top:388px;width:15px;height:199.7px;background:#f4f4f4;"></div>
<div class="r" style="left:893px;top:430px;width:9px;height:17px;border-radius:4.5px;background:#8a8a8a"></div>
<div class="r" style="left:892.5px;top:392px;width:0;height:0;border:4.5px solid transparent;border-bottom:5px solid #7a7a7a;border-top:none"></div>
<div class="r" style="left:892.5px;top:573px;width:0;height:0;border:4.5px solid transparent;border-top:5px solid #7a7a7a;border-bottom:none"></div>
<div class="t" style="left:922.3px;top:297.54px;font-size:12px;color:#202020;letter-spacing:0.136px;">Равно</div>
<div class="t" style="left:922.3px;top:313.54px;font-size:12px;color:#202020;letter-spacing:0.033px;">Больше</div>
<div class="t" style="left:922.3px;top:329.54px;font-size:12px;color:#202020;letter-spacing:0.104px;">Меньше</div>
<div class="t" style="left:922.3px;top:345.54px;font-size:12px;color:#3b8fad;letter-spacing:0.071px;">Больше или равно</div>
<div class="t" style="left:922.3px;top:361.54px;font-size:12px;color:#202020;letter-spacing:0.095px;">Меньше или равно</div>
<div class="t" style="left:922.3px;top:377.54px;font-size:12px;color:#202020;letter-spacing:0.145px;">Имеет значение</div>
<div class="t" style="left:922.3px;top:393.54px;font-size:12px;color:#202020;letter-spacing:0.031px;">Элемент из набора</div>
<div class="t" style="left:922.3px;top:409.54px;font-size:12px;color:#202020;letter-spacing:0.061px;">Строка</div>
<div class="t" style="left:922.3px;top:425.54px;font-size:12px;color:#202020;letter-spacing:0.247px;">Число</div>
<div class="t" style="left:922.3px;top:441.54px;font-size:12px;color:#202020;letter-spacing:0.399px;">Диапазон</div>
<div class="r" style="left:1071px;top:296px;width:204px;height:38px;border:1px solid #939393;border-radius:4px;box-sizing:content-box"></div>
<div class="r" style="left:1079.5px;top:294px;width:89.5px;height:5px;background:#ffffff;"></div>
<div class="t" style="left:1083.3px;top:291.36px;font-size:9.5px;color:#5e5e5e;letter-spacing:0.193px;">Введите значение</div>
<div class="t" style="left:1083.5px;top:309.00px;font-size:13px;color:#1a1a1a;letter-spacing:-0.344px;">590</div>
<div class="r" style="left:1163px;top:597px;width:114px;height:35.700px;border-radius:4px;background:#3b8fad"></div>
<div class="t" style="left:1180.4px;top:607.65px;font-size:14px;color:#ffffff;letter-spacing:1.254px;-webkit-text-stroke:0.180px #fff;">Сохранить</div>
</body></html>
